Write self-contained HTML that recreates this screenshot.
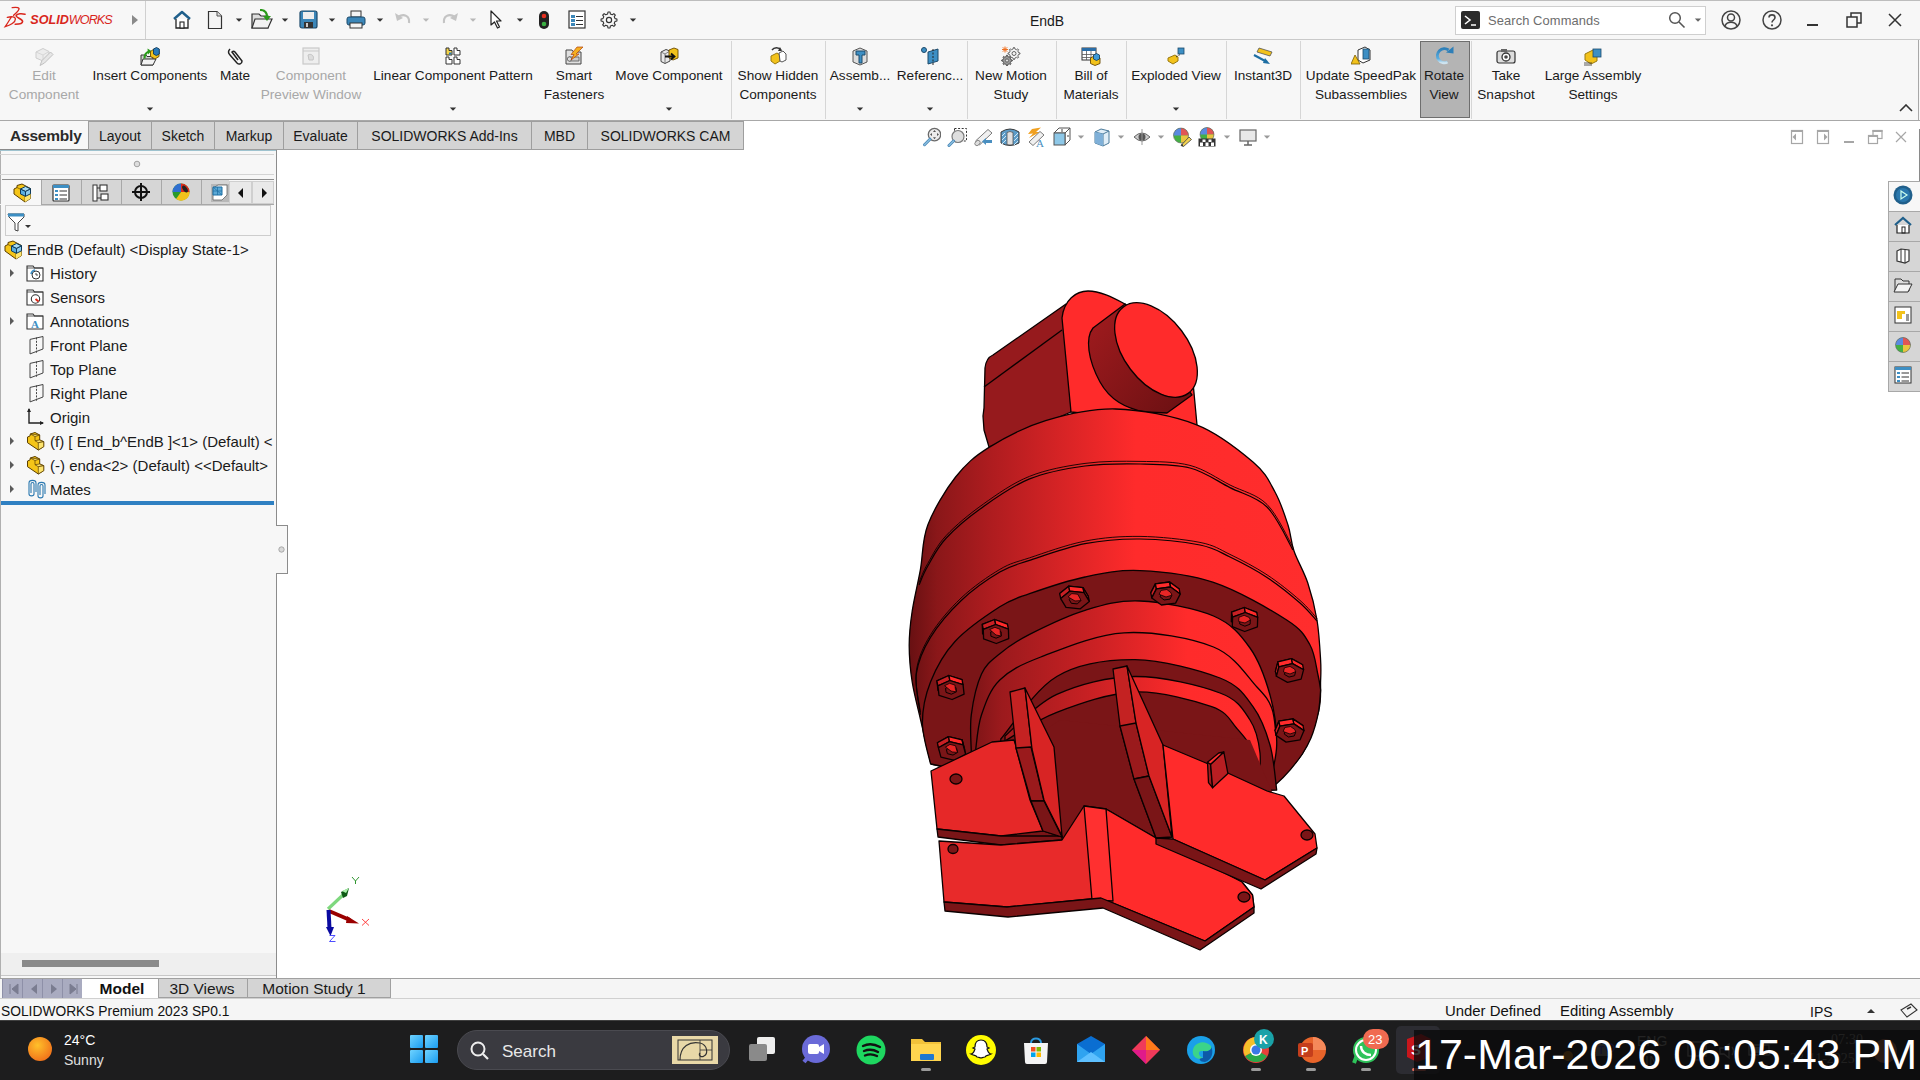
<!DOCTYPE html><html><head><meta charset="utf-8"><style>
html,body{margin:0;padding:0;width:1920px;height:1080px;overflow:hidden;background:#fff;font-family:"Liberation Sans",sans-serif;}
.t{position:absolute;white-space:nowrap;}
.r{position:absolute;}
</style></head><body>

<div class="r" style="left:0px;top:0px;width:1920px;height:40px;background:#f7f7f7;"></div>
<div class="r" style="left:0px;top:0px;width:1920px;height:1px;background:#bdbdbd;"></div>
<div class="r" style="left:0px;top:39px;width:1920px;height:1px;background:#c9c9c9;"></div>
<div class="r" style="left:145px;top:1px;width:1px;height:38px;background:#d0d0d0;"></div>
<svg class="r" style="left:0px;top:0px" width="30" height="30" viewBox="0 0 30 30"><g fill="none" stroke="#d9261c" stroke-linecap="round"><path d="M12.2 7.6 C15 7.3 18.3 7.2 19 8.3 C19.6 9.6 16.5 12.8 13.6 15.3" stroke-width="1.4"/><path d="M7.3 17.4 C11.5 16.3 15.3 16.5 15.4 19 C15.5 22.2 10.5 25.3 5.2 26.6 C7.5 23.5 9.5 20 11.2 17.2" stroke-width="1.3"/><path d="M25 14.2 C22 13.4 17.2 13.4 16.2 15.4 C15.2 17.6 22.6 18.8 22.6 21.6 C22.6 23.6 19.3 24.3 15.2 24.3" stroke-width="1.6"/></g></svg>
<div class="t" style="left:30.3px;top:14.13px;font-size:12.6px;line-height:12.6px;color:#d9261c;font-weight:normal;"><i><b>SOLID</b><span style="letter-spacing:-0.9px">WORKS</span></i></div>
<svg class="r" style="left:131px;top:14px" width="8" height="12" viewBox="0 0 8 12"><path d="M1 1 L7 6 L1 11Z" fill="#8a8a8a"/></svg>
<svg class="r" style="left:172px;top:10px" width="20" height="20" viewBox="0 0 20 20"><path d="M2 9 L10 2 L18 9" fill="none" stroke="#1f5f8b" stroke-width="2.4" stroke-linejoin="round"/><path d="M4 9 V18 H16 V9" fill="#fff" stroke="#222" stroke-width="1.3"/><rect x="8" y="12" width="4" height="6" fill="#fff" stroke="#222" stroke-width="1.1"/></svg>
<svg class="r" style="left:207px;top:10px" width="16" height="20" viewBox="0 0 16 20"><path d="M1.5 1.5 H10 L14.5 6 V18.5 H1.5Z" fill="#f4f4f4" stroke="#333" stroke-width="1.2"/><path d="M10 1.5 V6 H14.5" fill="#ddd" stroke="#555" stroke-width="1"/></svg>
<svg class="r" style="left:235px;top:18px" width="8" height="5" viewBox="0 0 8 5"><path d="M0.8 0.5 L7.2 0.5 L4 3.8Z" fill="#333"/></svg>
<svg class="r" style="left:251px;top:9px" width="22" height="21" viewBox="0 0 22 21"><path d="M1 5 H8 L10 7 H17 V19 H1Z" fill="#ddd" stroke="#333" stroke-width="1.2"/><path d="M4 10 H21 L17 19 H1Z" fill="#f2f2f2" stroke="#333" stroke-width="1.2"/><path d="M9 1 C14 1 16 4 16 8" fill="none" stroke="#2a9a1a" stroke-width="2.2"/><path d="M12 7 L16 12 L20 7Z" fill="#2a9a1a"/></svg>
<svg class="r" style="left:281px;top:18px" width="8" height="5" viewBox="0 0 8 5"><path d="M0.8 0.5 L7.2 0.5 L4 3.8Z" fill="#333"/></svg>
<svg class="r" style="left:299px;top:10px" width="19" height="19" viewBox="0 0 19 19"><rect x="1" y="1" width="17" height="17" rx="2" fill="#3b86b8" stroke="#1d4a6b" stroke-width="1.2"/><rect x="4" y="2" width="11" height="7" fill="#eee"/><rect x="5" y="12" width="9" height="6" fill="#333"/><rect x="7" y="13" width="2" height="4" fill="#ccc"/></svg>
<svg class="r" style="left:328px;top:18px" width="8" height="5" viewBox="0 0 8 5"><path d="M0.8 0.5 L7.2 0.5 L4 3.8Z" fill="#333"/></svg>
<svg class="r" style="left:346px;top:10px" width="20" height="19" viewBox="0 0 20 19"><rect x="5" y="1" width="10" height="6" fill="#f4f4f4" stroke="#333" stroke-width="1"/><rect x="1" y="7" width="18" height="8" rx="2" fill="#3b86b8" stroke="#1d4a6b" stroke-width="1"/><rect x="4" y="13" width="12" height="5" fill="#f4f4f4" stroke="#333" stroke-width="1"/></svg>
<svg class="r" style="left:376px;top:18px" width="8" height="5" viewBox="0 0 8 5"><path d="M0.8 0.5 L7.2 0.5 L4 3.8Z" fill="#333"/></svg>
<svg class="r" style="left:394px;top:11px" width="18" height="16" viewBox="0 0 18 16"><path d="M4 6 C10 2 16 5 15 12" fill="none" stroke="#c4c4c4" stroke-width="2.2"/><path d="M1 2 L3 10 L9 7Z" fill="#c4c4c4"/></svg>
<svg class="r" style="left:422px;top:18px" width="8" height="5" viewBox="0 0 8 5"><path d="M0.8 0.5 L7.2 0.5 L4 3.8Z" fill="#b8b8b8"/></svg>
<svg class="r" style="left:441px;top:11px" width="18" height="16" viewBox="0 0 18 16"><path d="M14 6 C8 2 2 5 3 12" fill="none" stroke="#c4c4c4" stroke-width="2.2"/><path d="M17 2 L15 10 L9 7Z" fill="#c4c4c4"/></svg>
<svg class="r" style="left:469px;top:18px" width="8" height="5" viewBox="0 0 8 5"><path d="M0.8 0.5 L7.2 0.5 L4 3.8Z" fill="#b8b8b8"/></svg>
<svg class="r" style="left:489px;top:10px" width="16" height="20" viewBox="0 0 16 20"><path d="M2 1 L2 15 L5.5 12 L8.5 18 L10.5 17 L7.5 11 L12 11Z" fill="#fff" stroke="#222" stroke-width="1.2" stroke-linejoin="round"/></svg>
<svg class="r" style="left:516px;top:18px" width="8" height="5" viewBox="0 0 8 5"><path d="M0.8 0.5 L7.2 0.5 L4 3.8Z" fill="#333"/></svg>
<svg class="r" style="left:538px;top:10px" width="12" height="20" viewBox="0 0 12 20"><rect x="1" y="1" width="10" height="18" rx="5" fill="#222"/><circle cx="6" cy="6" r="2.3" fill="#e53020"/><circle cx="6" cy="14" r="2.3" fill="#3cb043"/></svg>
<svg class="r" style="left:568px;top:10px" width="18" height="19" viewBox="0 0 18 19"><rect x="1" y="1" width="16" height="17" fill="#fff" stroke="#333" stroke-width="1.2"/><rect x="3" y="5" width="4" height="3" fill="#3b86b8"/><rect x="3" y="9" width="4" height="3" fill="#3b86b8"/><rect x="3" y="13" width="4" height="3" fill="#3b86b8"/><path d="M8 6.5H15M8 10.5H15M8 14.5H15" stroke="#333" stroke-width="1"/></svg>
<svg class="r" style="left:600px;top:11px" width="18" height="18" viewBox="0 0 18 18"><path d="M15.05 7.65 L16.93 7.96 L16.93 10.04 L15.05 10.35 L14.24 12.32 L15.34 13.88 L13.88 15.34 L12.32 14.24 L10.35 15.05 L10.04 16.93 L7.96 16.93 L7.65 15.05 L5.68 14.24 L4.12 15.34 L2.66 13.88 L3.76 12.32 L2.95 10.35 L1.07 10.04 L1.07 7.96 L2.95 7.65 L3.76 5.68 L2.66 4.12 L4.12 2.66 L5.68 3.76 L7.65 2.95 L7.96 1.07 L10.04 1.07 L10.35 2.95 L12.32 3.76 L13.88 2.66 L15.34 4.12 L14.24 5.68Z" fill="#f7f7f7" stroke="#333" stroke-width="1.1" stroke-linejoin="round"/><circle cx="9" cy="9" r="2.6" fill="none" stroke="#333" stroke-width="1.2"/></svg>
<svg class="r" style="left:629px;top:18px" width="8" height="5" viewBox="0 0 8 5"><path d="M0.8 0.5 L7.2 0.5 L4 3.8Z" fill="#333"/></svg>
<div class="t" style="left:1047px;top:14.15px;font-size:14px;line-height:14px;color:#1a1a1a;font-weight:normal;transform:translateX(-50%);">EndB</div>
<div class="r" style="left:1455px;top:6px;width:251px;height:29px;background:#ffffff;border:1px solid #cfcfcf;box-sizing:border-box;"></div>
<svg class="r" style="left:1461px;top:11px" width="19" height="18" viewBox="0 0 19 18"><rect x="0" y="0" width="19" height="18" rx="2" fill="#2b2b2b"/><path d="M4 5 L9 9 L4 13" fill="none" stroke="#fff" stroke-width="1.6"/><path d="M10 14 H15" stroke="#fff" stroke-width="1.5"/></svg>
<div class="t" style="left:1488px;top:14.88px;font-size:12.9px;line-height:12.9px;color:#6d6d6d;font-weight:normal;letter-spacing:0.1px;">Search Commands</div>
<svg class="r" style="left:1668px;top:11px" width="18" height="18" viewBox="0 0 18 18"><circle cx="7" cy="7" r="5.3" fill="none" stroke="#555" stroke-width="1.5"/><path d="M11 11 L16.5 16.5" stroke="#555" stroke-width="1.6"/></svg>
<svg class="r" style="left:1694px;top:18px" width="8" height="5" viewBox="0 0 8 5"><path d="M0.8 0.5 L7.2 0.5 L4 3.8Z" fill="#666"/></svg>
<svg class="r" style="left:1720px;top:9px" width="22" height="22" viewBox="0 0 22 22"><circle cx="11" cy="11" r="9" fill="none" stroke="#444" stroke-width="1.5"/><circle cx="11" cy="8.5" r="3.5" fill="none" stroke="#444" stroke-width="1.5"/><path d="M5 17 C7 12 15 12 17 17" fill="none" stroke="#444" stroke-width="1.5"/></svg>
<svg class="r" style="left:1761px;top:9px" width="22" height="22" viewBox="0 0 22 22"><circle cx="11" cy="11" r="9" fill="none" stroke="#444" stroke-width="1.5"/><path d="M8 8.5 C8 5 14 5 14 8.5 C14 11 11 11 11 13.5" fill="none" stroke="#444" stroke-width="1.6"/><circle cx="11" cy="16.3" r="1.1" fill="#444"/></svg>
<div class="r" style="left:1807px;top:24px;width:11px;height:2px;background:#333;"></div>
<svg class="r" style="left:1846px;top:12px" width="17" height="16" viewBox="0 0 17 16"><rect x="1" y="5" width="10" height="10" fill="none" stroke="#333" stroke-width="1.5"/><path d="M5 5 V1 H15 V11 H11" fill="none" stroke="#333" stroke-width="1.5"/></svg>
<svg class="r" style="left:1887px;top:12px" width="16" height="16" viewBox="0 0 16 16"><path d="M2 2 L14 14 M14 2 L2 14" stroke="#333" stroke-width="1.5"/></svg>
<div class="r" style="left:0px;top:40px;width:1920px;height:81px;background:#f7f7f7;"></div>
<div class="r" style="left:0px;top:120px;width:1920px;height:1px;background:#a8a8a8;"></div>
<div class="r" style="left:1918px;top:40px;width:1px;height:81px;background:#a8a8a8;"></div>
<div class="r" style="left:731px;top:41px;width:1px;height:78px;background:#d6d6d6;"></div>
<div class="r" style="left:825px;top:41px;width:1px;height:78px;background:#d6d6d6;"></div>
<div class="r" style="left:967px;top:41px;width:1px;height:78px;background:#d6d6d6;"></div>
<div class="r" style="left:1056px;top:41px;width:1px;height:78px;background:#d6d6d6;"></div>
<div class="r" style="left:1126px;top:41px;width:1px;height:78px;background:#d6d6d6;"></div>
<div class="r" style="left:1226px;top:41px;width:1px;height:78px;background:#d6d6d6;"></div>
<div class="r" style="left:1300px;top:41px;width:1px;height:78px;background:#d6d6d6;"></div>
<div class="r" style="left:1471px;top:41px;width:1px;height:78px;background:#d6d6d6;"></div>
<div class="r" style="left:1420px;top:41px;width:50px;height:77px;background:#b4b4b4;border:1px solid #6e6e6e;box-sizing:border-box;"></div>
<div class="t" style="left:44px;top:68.99px;font-size:13.6px;line-height:13.6px;color:#a8a8a8;font-weight:normal;transform:translateX(-50%);">Edit</div>
<div class="t" style="left:44px;top:87.99px;font-size:13.6px;line-height:13.6px;color:#a8a8a8;font-weight:normal;transform:translateX(-50%);">Component</div>
<div class="t" style="left:150px;top:68.99px;font-size:13.6px;line-height:13.6px;color:#1a1a1a;font-weight:normal;transform:translateX(-50%);">Insert Components</div>
<svg class="r" style="left:146px;top:106.5px" width="8" height="5" viewBox="0 0 8 5"><path d="M0.8 0.5 L7.2 0.5 L4 3.8Z" fill="#333"/></svg>
<div class="t" style="left:235px;top:68.99px;font-size:13.6px;line-height:13.6px;color:#1a1a1a;font-weight:normal;transform:translateX(-50%);">Mate</div>
<div class="t" style="left:311px;top:68.99px;font-size:13.6px;line-height:13.6px;color:#a8a8a8;font-weight:normal;transform:translateX(-50%);">Component</div>
<div class="t" style="left:311px;top:87.99px;font-size:13.6px;line-height:13.6px;color:#a8a8a8;font-weight:normal;transform:translateX(-50%);">Preview Window</div>
<div class="t" style="left:453px;top:68.99px;font-size:13.6px;line-height:13.6px;color:#1a1a1a;font-weight:normal;transform:translateX(-50%);">Linear Component Pattern</div>
<svg class="r" style="left:449px;top:106.5px" width="8" height="5" viewBox="0 0 8 5"><path d="M0.8 0.5 L7.2 0.5 L4 3.8Z" fill="#333"/></svg>
<div class="t" style="left:574px;top:68.99px;font-size:13.6px;line-height:13.6px;color:#1a1a1a;font-weight:normal;transform:translateX(-50%);">Smart</div>
<div class="t" style="left:574px;top:87.99px;font-size:13.6px;line-height:13.6px;color:#1a1a1a;font-weight:normal;transform:translateX(-50%);">Fasteners</div>
<div class="t" style="left:669px;top:68.99px;font-size:13.6px;line-height:13.6px;color:#1a1a1a;font-weight:normal;transform:translateX(-50%);">Move Component</div>
<svg class="r" style="left:665px;top:106.5px" width="8" height="5" viewBox="0 0 8 5"><path d="M0.8 0.5 L7.2 0.5 L4 3.8Z" fill="#333"/></svg>
<div class="t" style="left:778px;top:68.99px;font-size:13.6px;line-height:13.6px;color:#1a1a1a;font-weight:normal;transform:translateX(-50%);">Show Hidden</div>
<div class="t" style="left:778px;top:87.99px;font-size:13.6px;line-height:13.6px;color:#1a1a1a;font-weight:normal;transform:translateX(-50%);">Components</div>
<div class="t" style="left:860px;top:68.99px;font-size:13.6px;line-height:13.6px;color:#1a1a1a;font-weight:normal;transform:translateX(-50%);">Assemb...</div>
<svg class="r" style="left:856px;top:106.5px" width="8" height="5" viewBox="0 0 8 5"><path d="M0.8 0.5 L7.2 0.5 L4 3.8Z" fill="#333"/></svg>
<div class="t" style="left:930px;top:68.99px;font-size:13.6px;line-height:13.6px;color:#1a1a1a;font-weight:normal;transform:translateX(-50%);">Referenc...</div>
<svg class="r" style="left:926px;top:106.5px" width="8" height="5" viewBox="0 0 8 5"><path d="M0.8 0.5 L7.2 0.5 L4 3.8Z" fill="#333"/></svg>
<div class="t" style="left:1011px;top:68.99px;font-size:13.6px;line-height:13.6px;color:#1a1a1a;font-weight:normal;transform:translateX(-50%);">New Motion</div>
<div class="t" style="left:1011px;top:87.99px;font-size:13.6px;line-height:13.6px;color:#1a1a1a;font-weight:normal;transform:translateX(-50%);">Study</div>
<div class="t" style="left:1091px;top:68.99px;font-size:13.6px;line-height:13.6px;color:#1a1a1a;font-weight:normal;transform:translateX(-50%);">Bill of</div>
<div class="t" style="left:1091px;top:87.99px;font-size:13.6px;line-height:13.6px;color:#1a1a1a;font-weight:normal;transform:translateX(-50%);">Materials</div>
<div class="t" style="left:1176px;top:68.99px;font-size:13.6px;line-height:13.6px;color:#1a1a1a;font-weight:normal;transform:translateX(-50%);">Exploded View</div>
<svg class="r" style="left:1172px;top:106.5px" width="8" height="5" viewBox="0 0 8 5"><path d="M0.8 0.5 L7.2 0.5 L4 3.8Z" fill="#333"/></svg>
<div class="t" style="left:1263px;top:68.99px;font-size:13.6px;line-height:13.6px;color:#1a1a1a;font-weight:normal;transform:translateX(-50%);">Instant3D</div>
<div class="t" style="left:1361px;top:68.99px;font-size:13.6px;line-height:13.6px;color:#1a1a1a;font-weight:normal;transform:translateX(-50%);">Update SpeedPak</div>
<div class="t" style="left:1361px;top:87.99px;font-size:13.6px;line-height:13.6px;color:#1a1a1a;font-weight:normal;transform:translateX(-50%);">Subassemblies</div>
<div class="t" style="left:1444px;top:68.99px;font-size:13.6px;line-height:13.6px;color:#1a1a1a;font-weight:normal;transform:translateX(-50%);">Rotate</div>
<div class="t" style="left:1444px;top:87.99px;font-size:13.6px;line-height:13.6px;color:#1a1a1a;font-weight:normal;transform:translateX(-50%);">View</div>
<div class="t" style="left:1506px;top:68.99px;font-size:13.6px;line-height:13.6px;color:#1a1a1a;font-weight:normal;transform:translateX(-50%);">Take</div>
<div class="t" style="left:1506px;top:87.99px;font-size:13.6px;line-height:13.6px;color:#1a1a1a;font-weight:normal;transform:translateX(-50%);">Snapshot</div>
<div class="t" style="left:1593px;top:68.99px;font-size:13.6px;line-height:13.6px;color:#1a1a1a;font-weight:normal;transform:translateX(-50%);">Large Assembly</div>
<div class="t" style="left:1593px;top:87.99px;font-size:13.6px;line-height:13.6px;color:#1a1a1a;font-weight:normal;transform:translateX(-50%);">Settings</div>
<svg class="r" style="left:1899px;top:104px" width="14" height="8" viewBox="0 0 14 8"><path d="M1 7 L7 1 L13 7" fill="none" stroke="#333" stroke-width="1.6"/></svg>
<svg class="r" style="left:34px;top:46px" width="20" height="20" viewBox="0 0 20 20"><path d="M2 6 L9 2.5 L15 5.5 V12 L9 15 L2 12Z" fill="#ececec" stroke="#cdcdcd" stroke-width="1"/><path d="M2 6 L9 9 L15 5.5 M9 9 V15" fill="none" stroke="#d0d0d0" stroke-width="0.8"/><path d="M6 19.5 L8 14.5 L16.5 6 L19 8.5 L10.5 17Z" fill="#e6e6e6" stroke="#c0c0c0" stroke-width="1"/></svg>
<svg class="r" style="left:140px;top:46px" width="20" height="20" viewBox="0 0 20 20"><path d="M1 9 H6 L7 10.5 H13 V19 H1Z" fill="#cfcfcf" stroke="#333" stroke-width="1"/><path d="M3 13 H16 L13 19 H1Z" fill="#f2f2f2" stroke="#333" stroke-width="1"/><path d="M4.5 12.5 C4.5 8.5 6 6.5 9 5.5" fill="none" stroke="#2a9a1a" stroke-width="2"/><path d="M7.5 2.5 L11.5 5 L8 8.5Z" fill="#2a9a1a"/><path d="M10.5 5.5 L14 3 L19 4.5 V10.5 L15 13 L10.5 10.5Z" fill="#f2c21b" stroke="#6a4a00" stroke-width="0.9"/><path d="M13.5 3 L16.5 1.5 L19.3 3 V8 L16.3 9.5 L13.5 8Z" fill="#2a7ab8" stroke="#0d3a5c" stroke-width="0.9"/></svg>
<svg class="r" style="left:225px;top:46px" width="20" height="20" viewBox="0 0 20 20"><path d="M5 3 C3 5 3 7 5 9 L12 17 C14 19 17 18 17 15 L10 6 C9 5 8 5 7 6 L13 14" fill="none" stroke="#222" stroke-width="1.5"/></svg>
<svg class="r" style="left:301px;top:46px" width="20" height="20" viewBox="0 0 20 20"><rect x="2" y="2" width="16" height="16" fill="#eee" stroke="#c9c9c9" stroke-width="1.2"/><path d="M2 5 H18" stroke="#c9c9c9"/><path d="M7 9 C10 7 14 10 12 14 L8 14Z" fill="#ddd" stroke="#c4c4c4"/></svg>
<svg class="r" style="left:443px;top:46px" width="20" height="20" viewBox="0 0 20 20"><path d="M3 2 H6 V4.5 H9 V9 H3Z" fill="#f5d54a" stroke="#333" stroke-width="1"/><path d="M11 2 H14 V4.5 H17 V9 H11Z" fill="#fff" stroke="#333" stroke-width="1"/><path d="M3 11 H6 V13.5 H9 V18 H3Z" fill="#fff" stroke="#333" stroke-width="1"/><path d="M11 11 H14 V13.5 H17 V18 H11Z" fill="#fff" stroke="#333" stroke-width="1"/><rect x="6" y="6.5" width="2.5" height="2" fill="#2a7ab8"/></svg>
<svg class="r" style="left:564px;top:46px" width="20" height="20" viewBox="0 0 20 20"><path d="M2 4 H8 L9.5 6 H17 V18 H2Z" fill="#e0e0e0" stroke="#444" stroke-width="1"/><path d="M5 11 H15 V15 H5Z" fill="#ccc" stroke="#555" stroke-width="0.8"/><circle cx="5.5" cy="13" r="2.2" fill="#ddd" stroke="#555" stroke-width="0.8"/><path d="M13 1 L19 1 L12 8 H15 L7 14 L10 8.5 H7Z" fill="#f5b020" stroke="#b04010" stroke-width="0.7"/></svg>
<svg class="r" style="left:659px;top:46px" width="20" height="20" viewBox="0 0 20 20"><path d="M2 6 L7 3.5 L11 5 V15 L6 17.5 L2 15.5Z" fill="#e8e8e8" stroke="#444" stroke-width="1"/><path d="M2 6 L6 8 L11 5 M6 8 V17.5" fill="none" stroke="#666" stroke-width="0.8"/><path d="M10 4 L15 2 L19 3.5 V12 L14 14 L10 12Z" fill="#f2c21b" stroke="#6a4a00" stroke-width="0.9"/><path d="M6 10.5 H15 M12 7.5 L15.5 10.5 L12 13.5" fill="none" stroke="#111" stroke-width="1.8"/></svg>
<svg class="r" style="left:768px;top:46px" width="20" height="20" viewBox="0 0 20 20"><path d="M3 10 L9 7 L12 9 V15 L7 18 L3 15Z" fill="#f2c21b" stroke="#9a7a10"/><path d="M11 7 L15 5 L18 8 V14 L14 16 L12 15Z" fill="#fff" stroke="#555"/><path d="M4 4 C6 1 11 1 13 4" fill="none" stroke="#333" stroke-width="1.4"/><path d="M12 1 L14 5 L10 5Z" fill="#333"/></svg>
<svg class="r" style="left:850px;top:46px" width="20" height="20" viewBox="0 0 20 20"><path d="M3 5 L10 2 L17 5 V16 L10 19 L3 16Z" fill="#ddd" stroke="#555"/><path d="M6 5 H15 V9 H12 V17 H9 V9 H6Z" fill="#3d8fc4" stroke="#1d4a6b"/></svg>
<svg class="r" style="left:920px;top:46px" width="20" height="20" viewBox="0 0 20 20"><circle cx="4" cy="4" r="2.5" fill="#3d8fc4" stroke="#1d4a6b"/><path d="M8 6 L18 3 V15 L8 18Z" fill="#3d8fc4" stroke="#1d4a6b"/><path d="M13 3 V19" stroke="#222" stroke-dasharray="2 1.5"/></svg>
<svg class="r" style="left:1001px;top:46px" width="20" height="20" viewBox="0 0 20 20"><path d="M17.51 6.60 L18.97 6.94 L18.97 8.06 L17.51 8.40 L16.82 10.06 L17.62 11.32 L16.82 12.12 L15.56 11.32 L13.90 12.01 L13.56 13.47 L12.44 13.47 L12.10 12.01 L10.44 11.32 L9.18 12.12 L8.38 11.32 L9.18 10.06 L8.49 8.40 L7.03 8.06 L7.03 6.94 L8.49 6.60 L9.18 4.94 L8.38 3.68 L9.18 2.88 L10.44 3.68 L12.10 2.99 L12.44 1.53 L13.56 1.53 L13.90 2.99 L15.56 3.68 L16.82 2.88 L17.62 3.68 L16.82 4.94Z" fill="#f4f4f4" stroke="#555" stroke-width="0.9" stroke-linejoin="round"/><circle cx="13" cy="7.5" r="2" fill="none" stroke="#555" stroke-width="0.9"/><path d="M9.92 13.72 L11.28 14.00 L11.28 15.00 L9.92 15.28 L9.33 16.72 L10.08 17.88 L9.38 18.58 L8.22 17.83 L6.78 18.42 L6.50 19.78 L5.50 19.78 L5.22 18.42 L3.78 17.83 L2.62 18.58 L1.92 17.88 L2.67 16.72 L2.08 15.28 L0.72 15.00 L0.72 14.00 L2.08 13.72 L2.67 12.28 L1.92 11.12 L2.62 10.42 L3.78 11.17 L5.22 10.58 L5.50 9.22 L6.50 9.22 L6.78 10.58 L8.22 11.17 L9.38 10.42 L10.08 11.12 L9.33 12.28Z" fill="#9a9a9a" stroke="#444" stroke-width="0.9" stroke-linejoin="round"/><circle cx="6" cy="14.5" r="1.6" fill="#ddd" stroke="#444" stroke-width="0.7"/><path d="M4 0.5 V6.5 M1 3.5 H7 M1.8 1.3 L6.2 5.7 M6.2 1.3 L1.8 5.7" stroke="#f07020" stroke-width="1"/></svg>
<svg class="r" style="left:1081px;top:46px" width="20" height="20" viewBox="0 0 20 20"><rect x="1" y="2" width="14" height="12" fill="#fff" stroke="#333" stroke-width="1"/><rect x="1" y="2" width="14" height="3" fill="#2a6ea8"/><path d="M1 8.5 H15 M1 11.5 H15 M5.5 5 V14 M10 5 V14" stroke="#555" stroke-width="0.8"/><path d="M9.5 12 L14 9.5 L19 12 V17.5 L14 19.5 L9.5 17.5Z" fill="#f2c21b" stroke="#6a4a00" stroke-width="0.9"/><path d="M12.5 9 L15.5 7.5 L18.5 9 V13 L15.5 14.5 L12.5 13Z" fill="#3d9ad8" stroke="#0d3a5c" stroke-width="0.8"/></svg>
<svg class="r" style="left:1166px;top:46px" width="20" height="20" viewBox="0 0 20 20"><path d="M2 12 L9 9 L12 11 V15 L7 18 L2 15Z" fill="#f2c21b" stroke="#9a7a10"/><rect x="12" y="2" width="6" height="6" fill="#3d8fc4" stroke="#1d4a6b" stroke-width="0.8"/><path d="M10 11 L15 8" stroke="#333" stroke-dasharray="1.5 1.5"/></svg>
<svg class="r" style="left:1253px;top:46px" width="20" height="20" viewBox="0 0 20 20"><path d="M6 2 L19 6 L17 10 L4 6Z" fill="#f2c21b" stroke="#555" stroke-width="0.8"/><path d="M1 9 L14 16" stroke="#1d6ea3" stroke-width="2.2"/><path d="M12 12 L17 18 L10 17Z" fill="#1d6ea3"/></svg>
<svg class="r" style="left:1351px;top:46px" width="20" height="20" viewBox="0 0 20 20"><path d="M7 4 L14 1 L19 4 V14 L12 17 L7 14Z" fill="#fff" stroke="#333"/><rect x="12" y="3" width="6" height="10" fill="#3d8fc4" stroke="#1d4a6b" stroke-width="0.8"/><path d="M4 9 L9 18 H0Z" fill="#f2c21b" stroke="#7a5a00" stroke-width="0.8"/></svg>
<svg class="r" style="left:1434px;top:45px" width="20" height="20" viewBox="0 0 20 20"><defs><linearGradient id="rg" x1="0" y1="0" x2="0" y2="1"><stop offset="0" stop-color="#2e7fb8"/><stop offset="0.7" stop-color="#5aaee0"/><stop offset="1" stop-color="#cfe4f0"/></linearGradient></defs><path d="M14.5 5 A7 7 0 1 0 13.5 17" fill="none" stroke="url(#rg)" stroke-width="3"/><path d="M12 7.5 L19.5 1.5 L19.5 8.5Z" fill="#2e7fb8"/></svg>
<svg class="r" style="left:1496px;top:46px" width="20" height="20" viewBox="0 0 20 20"><rect x="1" y="5" width="18" height="12" rx="2" fill="#ddd" stroke="#333" stroke-width="1.2"/><rect x="5" y="3" width="6" height="3" fill="#666"/><circle cx="10" cy="11" r="4" fill="#fff" stroke="#333" stroke-width="1.3"/><circle cx="10" cy="11" r="1.8" fill="#444"/></svg>
<svg class="r" style="left:1583px;top:46px" width="20" height="20" viewBox="0 0 20 20"><path d="M2 8 L10 4 L14 7 V15 L8 18 L2 14Z" fill="#f2c21b" stroke="#9a7a10"/><rect x="10" y="3" width="8" height="8" fill="#3d8fc4" stroke="#1d4a6b" stroke-width="0.8"/><path d="M1 17 H9 M1 19 H9" stroke="#333" stroke-width="0.8"/></svg>
<div class="r" style="left:0px;top:121px;width:1920px;height:29px;background:#f7f7f7;"></div>
<div class="r" style="left:0px;top:149px;width:88px;height:1px;background:#8a8a8a;"></div>
<div class="t" style="left:10px;top:128.38px;font-size:15.5px;line-height:15.5px;color:#2a2a2a;font-weight:bold;letter-spacing:-0.2px;">Assembly</div>
<div class="r" style="left:88px;top:121px;width:656px;height:29px;background:#d4d4d4;border:1px solid #9e9e9e;box-sizing:border-box;"></div>
<div class="t" style="left:120.0px;top:129.15px;font-size:14px;line-height:14px;color:#1a1a1a;font-weight:normal;transform:translateX(-50%);">Layout</div>
<div class="r" style="left:151px;top:121px;width:1px;height:29px;background:#9e9e9e;"></div>
<div class="t" style="left:183.0px;top:129.15px;font-size:14px;line-height:14px;color:#1a1a1a;font-weight:normal;transform:translateX(-50%);">Sketch</div>
<div class="r" style="left:214px;top:121px;width:1px;height:29px;background:#9e9e9e;"></div>
<div class="t" style="left:249.0px;top:129.15px;font-size:14px;line-height:14px;color:#1a1a1a;font-weight:normal;transform:translateX(-50%);">Markup</div>
<div class="r" style="left:283px;top:121px;width:1px;height:29px;background:#9e9e9e;"></div>
<div class="t" style="left:320.5px;top:129.15px;font-size:14px;line-height:14px;color:#1a1a1a;font-weight:normal;transform:translateX(-50%);">Evaluate</div>
<div class="r" style="left:357px;top:121px;width:1px;height:29px;background:#9e9e9e;"></div>
<div class="t" style="left:444.5px;top:129.15px;font-size:14px;line-height:14px;color:#1a1a1a;font-weight:normal;transform:translateX(-50%);">SOLIDWORKS Add-Ins</div>
<div class="r" style="left:531px;top:121px;width:1px;height:29px;background:#9e9e9e;"></div>
<div class="t" style="left:559.5px;top:129.15px;font-size:14px;line-height:14px;color:#1a1a1a;font-weight:normal;transform:translateX(-50%);">MBD</div>
<div class="r" style="left:587px;top:121px;width:1px;height:29px;background:#9e9e9e;"></div>
<div class="t" style="left:665.5px;top:129.15px;font-size:14px;line-height:14px;color:#1a1a1a;font-weight:normal;transform:translateX(-50%);">SOLIDWORKS CAM</div>
<div class="r" style="left:0px;top:150px;width:277px;height:828px;background:#f7f7f7;"></div>
<div class="r" style="left:276px;top:150px;width:1px;height:828px;background:#8c8c8c;"></div>
<div class="r" style="left:0px;top:150px;width:1px;height:828px;background:#b0b0b0;"></div>
<div class="r" style="left:0px;top:150px;width:276px;height:1px;background:#9fc3cf;"></div>
<div class="r" style="left:0px;top:154px;width:274px;height:1px;background:#d4d4d4;"></div>
<svg class="r" style="left:133px;top:160px" width="8" height="8" viewBox="0 0 8 8"><circle cx="4" cy="4" r="2.8" fill="#ddd" stroke="#999" stroke-width="0.9"/></svg>
<div class="r" style="left:0px;top:174px;width:274px;height:1px;background:#d4d4d4;"></div>
<div class="r" style="left:2px;top:179px;width:272px;height:1px;background:#8e8e8e;"></div>
<div class="r" style="left:41px;top:180px;width:188px;height:25px;background:#d6d6d6;"></div>
<div class="r" style="left:41px;top:180px;width:1px;height:25px;background:#a8a8a8;"></div>
<div class="r" style="left:81px;top:180px;width:1px;height:25px;background:#a8a8a8;"></div>
<div class="r" style="left:121px;top:180px;width:1px;height:25px;background:#a8a8a8;"></div>
<div class="r" style="left:161px;top:180px;width:1px;height:25px;background:#a8a8a8;"></div>
<div class="r" style="left:201px;top:180px;width:1px;height:25px;background:#a8a8a8;"></div>
<div class="r" style="left:0px;top:204px;width:41px;height:1px;background:#f7f7f7;"></div>
<div class="r" style="left:41px;top:204px;width:233px;height:1px;background:#a8a8a8;"></div>
<div class="r" style="left:229px;top:181px;width:23px;height:23px;background:#e9e9e9;border:1px solid #cfcfcf;box-sizing:border-box;"></div>
<div class="r" style="left:252px;top:181px;width:22px;height:23px;background:#e9e9e9;border:1px solid #cfcfcf;box-sizing:border-box;"></div>
<svg class="r" style="left:237px;top:187px" width="7" height="12" viewBox="0 0 7 12"><path d="M6 1 L1 6 L6 11Z" fill="#111"/></svg>
<svg class="r" style="left:261px;top:187px" width="7" height="12" viewBox="0 0 7 12"><path d="M1 1 L6 6 L1 11Z" fill="#111"/></svg>
<svg class="r" style="left:13px;top:183px" width="20" height="20" viewBox="0 0 20 20"><path d="M1 6 L4 4.5 L4 2.5 L9 1 L17.5 5.5 V15.5 L12 19 L1 11Z" fill="#f5c518" stroke="#5a3e00" stroke-width="1"/><path d="M4 4.5 L8 6.5 M12 13 V19" fill="none" stroke="#7a5a00" stroke-width="0.8"/><path d="M12 13 L17.5 10 V15.5 L12 19Z" fill="#fde46e"/><path d="M7.5 6 L12.5 8.3 V13.3 L7.5 11Z" fill="#5aaee0" stroke="#0d3a5c" stroke-width="1"/><path d="M12.5 8.3 L17.5 5.8 V10.8 L12.5 13.3Z" fill="#8ccbee" stroke="#0d3a5c" stroke-width="1"/><path d="M7.5 6 L12.5 3.5 L17.5 5.8 L12.5 8.3Z" fill="#a8dcf5" stroke="#0d3a5c" stroke-width="1"/></svg>
<svg class="r" style="left:51px;top:183px" width="20" height="20" viewBox="0 0 20 20"><rect x="2" y="2" width="16" height="16" rx="1" fill="#fff" stroke="#333" stroke-width="1.2"/><rect x="2" y="2" width="16" height="3" fill="#3d8fc4"/><rect x="4" y="7" width="3" height="2" fill="#3d8fc4"/><rect x="4" y="11" width="3" height="2" fill="#3d8fc4"/><rect x="4" y="15" width="3" height="2" fill="#3d8fc4"/><path d="M8.5 8H16M8.5 12H16M8.5 16H16" stroke="#333" stroke-width="1"/></svg>
<svg class="r" style="left:91px;top:183px" width="20" height="20" viewBox="0 0 20 20"><path d="M4 2 V18 M4 5 H10 M4 15 H10" fill="none" stroke="#333" stroke-width="1.2"/><rect x="9" y="2" width="7" height="6" fill="#fff" stroke="#333" stroke-width="1.1"/><rect x="10" y="11" width="7" height="6" fill="#fff" stroke="#333" stroke-width="1.1"/><rect x="2" y="2" width="4" height="16" fill="#fff" stroke="#333" stroke-width="1"/></svg>
<svg class="r" style="left:131px;top:182px" width="20" height="20" viewBox="0 0 20 20"><circle cx="10" cy="10" r="6" fill="none" stroke="#111" stroke-width="2"/><path d="M10 1 V19 M1 10 H19" stroke="#111" stroke-width="2"/></svg>
<svg class="r" style="left:171px;top:182px" width="20" height="20" viewBox="0 0 20 20"><circle cx="10" cy="10" r="8.5" fill="#2a9a2a"/><path d="M10 10 L10 1.5 A8.5 8.5 0 0 1 18.5 10Z" fill="#e02a1a"/><path d="M10 10 L18.5 10 A8.5 8.5 0 0 1 5 17Z" fill="#f2c21b"/><path d="M10 10 L1.5 10 A8.5 8.5 0 0 1 10 1.5Z" fill="#2f6fd0"/><ellipse cx="14" cy="7" rx="2" ry="4" transform="rotate(-35 14 7)" fill="#222"/></svg>
<svg class="r" style="left:210px;top:183px" width="20" height="20" viewBox="0 0 20 20"><rect x="1" y="1" width="18" height="18" fill="#b8b8b8"/><path d="M3 5 L8 2 H17 V12 L12 17 H3Z" fill="#fff" stroke="#666" stroke-width="0.8"/><path d="M3 4 H12 V12 H3Z" fill="#5ca9d6" stroke="#1d6ea3" stroke-width="1"/><path d="M3 4 L12 12 M7.5 4 V12 M3 8 H12" stroke="#1d6ea3" stroke-width="0.7"/></svg>
<div class="r" style="left:5px;top:205px;width:266px;height:31px;background:#f7f7f7;border:1px solid #cdcdcd;box-sizing:border-box;"></div>
<svg class="r" style="left:7px;top:212px" width="24" height="20" viewBox="0 0 24 20"><path d="M1 2 H17 V5 L11 11 V19 L8 18 V11 L2 5Z" fill="#fff" stroke="#444" stroke-width="1"/><rect x="1" y="1.5" width="16" height="3" fill="#3d8fc4"/><path d="M18 13 H24 L21 16Z" fill="#333"/></svg>
<div class="t" style="left:27px;top:241.80px;font-size:15px;line-height:15px;color:#1a1a1a;font-weight:normal;">EndB (Default) &lt;Display State-1&gt;</div>
<svg class="r" style="left:4px;top:240px" width="20" height="20" viewBox="0 0 20 20"><path d="M1 6 L4 4.5 L4 2.5 L9 1 L17.5 5.5 V15.5 L12 19 L1 11Z" fill="#f5c518" stroke="#5a3e00" stroke-width="1"/><path d="M4 4.5 L8 6.5 M12 13 V19" fill="none" stroke="#7a5a00" stroke-width="0.8"/><path d="M12 13 L17.5 10 V15.5 L12 19Z" fill="#fde46e"/><path d="M7.5 6 L12.5 8.3 V13.3 L7.5 11Z" fill="#5aaee0" stroke="#0d3a5c" stroke-width="1"/><path d="M12.5 8.3 L17.5 5.8 V10.8 L12.5 13.3Z" fill="#8ccbee" stroke="#0d3a5c" stroke-width="1"/><path d="M7.5 6 L12.5 3.5 L17.5 5.8 L12.5 8.3Z" fill="#a8dcf5" stroke="#0d3a5c" stroke-width="1"/></svg>
<svg class="r" style="left:9px;top:268px" width="6" height="10" viewBox="0 0 6 10"><path d="M1 1 L5 5 L1 9Z" fill="#5a5a5a"/></svg>
<svg class="r" style="left:26px;top:263px" width="20" height="20" viewBox="0 0 20 20"><path d="M1 3 H7 L8.5 5 H17 V18 H1Z" fill="#fff" stroke="#333" stroke-width="1.1"/><path d="M1 5 H17" stroke="#333" stroke-width="0.8"/><circle cx="10" cy="12" r="4" fill="none" stroke="#333" stroke-width="1"/><path d="M5 11 A5 5 0 0 1 9 7" fill="none" stroke="#3d8fc4" stroke-width="1.6"/><path d="M10 10 V12 H12" stroke="#333" stroke-width="0.9" fill="none"/></svg>
<div class="t" style="left:50px;top:266.30px;font-size:15px;line-height:15px;color:#1a1a1a;font-weight:normal;">History</div>
<svg class="r" style="left:26px;top:287px" width="20" height="20" viewBox="0 0 20 20"><path d="M1 3 H7 L8.5 5 H17 V18 H1Z" fill="#fff" stroke="#333" stroke-width="1.1"/><path d="M1 5 H17" stroke="#333" stroke-width="0.8"/><circle cx="9.5" cy="12" r="4.2" fill="#fff" stroke="#333" stroke-width="1.1"/><path d="M9.5 12 L12.5 14.5" stroke="#e02a1a" stroke-width="2"/></svg>
<div class="t" style="left:50px;top:290.30px;font-size:15px;line-height:15px;color:#1a1a1a;font-weight:normal;">Sensors</div>
<svg class="r" style="left:9px;top:316px" width="6" height="10" viewBox="0 0 6 10"><path d="M1 1 L5 5 L1 9Z" fill="#5a5a5a"/></svg>
<svg class="r" style="left:26px;top:311px" width="20" height="20" viewBox="0 0 20 20"><path d="M1 3 H7 L8.5 5 H17 V18 H1Z" fill="#fff" stroke="#333" stroke-width="1.1"/><path d="M1 5 H17" stroke="#333" stroke-width="0.8"/><text x="5" y="17" font-family="Liberation Serif" font-weight="bold" font-size="11" fill="#3d8fc4">A</text></svg>
<div class="t" style="left:50px;top:314.30px;font-size:15px;line-height:15px;color:#1a1a1a;font-weight:normal;">Annotations</div>
<svg class="r" style="left:26px;top:335px" width="20" height="20" viewBox="0 0 20 20"><path d="M4 4.4 L17 1.5 V14 L4 18.9Z" fill="none" stroke="#444" stroke-width="1"/><path d="M10.5 2.5 V18" stroke="#444" stroke-width="1" stroke-dasharray="2 1.3"/></svg>
<div class="t" style="left:50px;top:338.30px;font-size:15px;line-height:15px;color:#1a1a1a;font-weight:normal;">Front Plane</div>
<svg class="r" style="left:26px;top:359px" width="20" height="20" viewBox="0 0 20 20"><path d="M4 4.4 L17 1.5 V14 L4 18.9Z" fill="none" stroke="#444" stroke-width="1"/><path d="M10.5 2.5 V18" stroke="#444" stroke-width="1" stroke-dasharray="2 1.3"/></svg>
<div class="t" style="left:50px;top:362.30px;font-size:15px;line-height:15px;color:#1a1a1a;font-weight:normal;">Top Plane</div>
<svg class="r" style="left:26px;top:383px" width="20" height="20" viewBox="0 0 20 20"><path d="M4 4.4 L17 1.5 V14 L4 18.9Z" fill="none" stroke="#444" stroke-width="1"/><path d="M10.5 2.5 V18" stroke="#444" stroke-width="1" stroke-dasharray="2 1.3"/></svg>
<div class="t" style="left:50px;top:386.30px;font-size:15px;line-height:15px;color:#1a1a1a;font-weight:normal;">Right Plane</div>
<svg class="r" style="left:26px;top:407px" width="20" height="20" viewBox="0 0 20 20"><path d="M3 2 V16 H17" fill="none" stroke="#222" stroke-width="1.4"/><path d="M1 5 L3 1 L5 5Z M14 14 L18 16 L14 18Z" fill="#222"/></svg>
<div class="t" style="left:50px;top:410.30px;font-size:15px;line-height:15px;color:#1a1a1a;font-weight:normal;">Origin</div>
<svg class="r" style="left:9px;top:436px" width="6" height="10" viewBox="0 0 6 10"><path d="M1 1 L5 5 L1 9Z" fill="#5a5a5a"/></svg>
<svg class="r" style="left:26px;top:431px" width="20" height="20" viewBox="0 0 20 20"><path d="M1.5 6 L4 5 L4.3 3 L9 1.5 L13.7 4 V9 L17.7 10.7 V15.7 L12.3 19 L1.5 11.7Z" fill="#f5c518" stroke="#5a3e00" stroke-width="1"/><path d="M4.3 3 L9 5.5 L13.7 4Z" fill="#fde46e" stroke="#5a3e00" stroke-width="0.7"/><path d="M9 9.7 L13.7 9 L17.7 10.7 L12.3 11.7Z" fill="#fde46e" stroke="#5a3e00" stroke-width="0.7"/><path d="M12.3 11.7 L17.7 10.7 V15.7 L12.3 19Z" fill="#fde46e" stroke="#5a3e00" stroke-width="0.7"/><path d="M9 5.5 V9.7" stroke="#5a3e00" stroke-width="0.7"/></svg>
<div class="t" style="left:50px;top:434.30px;font-size:15px;line-height:15px;color:#1a1a1a;font-weight:normal;">(f) [ End_b^EndB ]&lt;1&gt; (Default) &lt;</div>
<svg class="r" style="left:9px;top:460px" width="6" height="10" viewBox="0 0 6 10"><path d="M1 1 L5 5 L1 9Z" fill="#5a5a5a"/></svg>
<svg class="r" style="left:26px;top:455px" width="20" height="20" viewBox="0 0 20 20"><path d="M1.5 6 L4 5 L4.3 3 L9 1.5 L13.7 4 V9 L17.7 10.7 V15.7 L12.3 19 L1.5 11.7Z" fill="#f5c518" stroke="#5a3e00" stroke-width="1"/><path d="M4.3 3 L9 5.5 L13.7 4Z" fill="#fde46e" stroke="#5a3e00" stroke-width="0.7"/><path d="M9 9.7 L13.7 9 L17.7 10.7 L12.3 11.7Z" fill="#fde46e" stroke="#5a3e00" stroke-width="0.7"/><path d="M12.3 11.7 L17.7 10.7 V15.7 L12.3 19Z" fill="#fde46e" stroke="#5a3e00" stroke-width="0.7"/><path d="M9 5.5 V9.7" stroke="#5a3e00" stroke-width="0.7"/></svg>
<div class="t" style="left:50px;top:458.30px;font-size:15px;line-height:15px;color:#1a1a1a;font-weight:normal;">(-) enda&lt;2&gt; (Default) &lt;&lt;Default&gt;</div>
<svg class="r" style="left:9px;top:484px" width="6" height="10" viewBox="0 0 6 10"><path d="M1 1 L5 5 L1 9Z" fill="#5a5a5a"/></svg>
<svg class="r" style="left:26px;top:479px" width="20" height="20" viewBox="0 0 20 20"><path d="M5 14 V5 C5 3 8 3 8 5 V15 C8 17.5 3 17.5 3 15 V4 C3 0.5 10 0.5 10 4 V13" fill="none" stroke="#2a78b0" stroke-width="1.1"/><path d="M14 16 V7 C14 5 17 5 17 7 V17 C17 19.5 12 19.5 12 17 V6 C12 2.5 19 2.5 19 6 V15" fill="none" stroke="#2a78b0" stroke-width="1.1"/></svg>
<div class="t" style="left:50px;top:482.30px;font-size:15px;line-height:15px;color:#1a1a1a;font-weight:normal;">Mates</div>
<div class="r" style="left:1px;top:501px;width:273px;height:4px;background:#2f80c2;"></div>
<div class="r" style="left:276px;top:525px;width:12px;height:49px;background:#f7f7f7;border:1px solid #8c8c8c;border-left:none;box-sizing:border-box;"></div>
<svg class="r" style="left:278px;top:546px" width="7" height="7" viewBox="0 0 7 7"><circle cx="3.5" cy="3.5" r="2.7" fill="#d8d8d8" stroke="#9a9a9a" stroke-width="0.8"/></svg>
<div class="r" style="left:1px;top:953px;width:275px;height:23px;background:#efefef;"></div>
<div class="r" style="left:22px;top:960px;width:137px;height:7px;background:#8a8a8a;"></div>
<div class="r" style="left:1px;top:975px;width:275px;height:1px;background:#c8c8c8;"></div>
<div class="r" style="left:744px;top:121px;width:1176px;height:29px;background:#ffffff;"></div>
<div class="r" style="left:0px;top:120px;width:1920px;height:1px;background:#a8a8a8;"></div>
<svg class="r" style="left:921px;top:127px" width="20" height="20" viewBox="0 0 20 20"><circle cx="13.5" cy="7.6" r="6.2" fill="#ececec" stroke="#6a6a6a" stroke-width="1.3"/><path d="M13.5 3 L12 5 H15Z M13.5 12.2 L12 10.2 H15Z M9 7.6 L11 6.1 V9.1Z M18 7.6 L16 6.1 V9.1Z" fill="#555"/><path d="M9 12.2 L3.5 17.7" stroke="#4a88b8" stroke-width="3" stroke-linecap="round"/><path d="M9 12.2 L3.5 17.7" stroke="#8cc0e0" stroke-width="1.3" stroke-linecap="round"/></svg>
<svg class="r" style="left:947px;top:127px" width="20" height="20" viewBox="0 0 20 20"><rect x="7.5" y="1.5" width="12" height="12.5" fill="none" stroke="#333" stroke-width="1" stroke-dasharray="2 1.6"/><circle cx="11" cy="9.5" r="6" fill="#dedede" stroke="#7a7a7a" stroke-width="1.2"/><path d="M6.5 14 L2 18.5" stroke="#4a88b8" stroke-width="3" stroke-linecap="round"/><path d="M6.5 14 L2 18.5" stroke="#8cc0e0" stroke-width="1.3" stroke-linecap="round"/></svg>
<svg class="r" style="left:974px;top:127px" width="20" height="20" viewBox="0 0 20 20"><path d="M1.5 14 L14 2.5 L18 6 L5.5 18Z" fill="#f0f0f0" stroke="#7a7a7a" stroke-width="1"/><ellipse cx="3.5" cy="16" rx="2.2" ry="3" transform="rotate(45 3.5 16)" fill="#ddd" stroke="#777" stroke-width="0.8"/><path d="M8 14.5 L12 11 V13 H18 V16 H12 V18Z" fill="#4a8fc0"/></svg>
<svg class="r" style="left:1000px;top:127px" width="20" height="20" viewBox="0 0 20 20"><path d="M1 5 Q10 -1 19 5 V16 Q10 21 1 16Z" fill="#5b9cc8" stroke="#3a3a3a" stroke-width="1"/><path d="M7 5.5 Q10 3.5 13 5.5 V17.5 Q10 18.5 7 17.5Z" fill="#e0e0e0" stroke="#555" stroke-width="0.8"/><path d="M2 9 L5 6 M2 13 L6 9 M2 17 L6 13 M14 10 L18 6 M14 14 L18 10 M14 18 L18 14" stroke="#cfe6f5" stroke-width="1"/></svg>
<svg class="r" style="left:1026px;top:127px" width="20" height="20" viewBox="0 0 20 20"><path d="M6 2 L15 0.5 L10 5 H14 L3 11 L7 6.5 L2 7Z" fill="#f0a020"/><path d="M3 15 L14 4.5 L18 8 L7 18.5Z" fill="#f0f0f0" stroke="#7a7a7a" stroke-width="1"/><text x="10" y="20" font-size="11" font-family="Liberation Serif" fill="#4a8fc0">A</text></svg>
<svg class="r" style="left:1052px;top:127px" width="20" height="20" viewBox="0 0 20 20"><path d="M2 6 L7 1 H18 L13 6Z" fill="#fff" stroke="#555" stroke-width="1"/><path d="M13 6 L18 1 V13 L13 18Z" fill="#fff" stroke="#555" stroke-width="1"/><rect x="2" y="6" width="11" height="12" fill="#8ec8e8" stroke="#555" stroke-width="1"/><path d="M10 2 V5 M15 9 H17" stroke="#444" stroke-width="1"/></svg>
<svg class="r" style="left:1077px;top:135px" width="8" height="5" viewBox="0 0 8 5"><path d="M0.8 0.5 L7.2 0.5 L4 3.8Z" fill="#9a9a9a"/></svg>
<svg class="r" style="left:1092px;top:127px" width="20" height="20" viewBox="0 0 20 20"><path d="M3 5 L9 2 L17 4 V16 L11 19 L3 16Z" fill="#e0eef8" stroke="#4a7a9a"/><path d="M3 5 L11 7 L17 4 M11 7 V19" fill="none" stroke="#4a7a9a"/><path d="M3 5 L11 7 V19 L3 16Z" fill="#7fb0d8"/></svg>
<svg class="r" style="left:1117px;top:135px" width="8" height="5" viewBox="0 0 8 5"><path d="M0.8 0.5 L7.2 0.5 L4 3.8Z" fill="#9a9a9a"/></svg>
<svg class="r" style="left:1132px;top:127px" width="20" height="20" viewBox="0 0 20 20"><path d="M2 10 Q10 2 18 10 Q10 18 2 10Z" fill="#ccc" stroke="#666"/><circle cx="10" cy="10" r="3.5" fill="#555"/><path d="M10 2 V18" stroke="#999" stroke-width="1"/></svg>
<svg class="r" style="left:1157px;top:135px" width="8" height="5" viewBox="0 0 8 5"><path d="M0.8 0.5 L7.2 0.5 L4 3.8Z" fill="#9a9a9a"/></svg>
<svg class="r" style="left:1172px;top:127px" width="20" height="20" viewBox="0 0 20 20"><circle cx="9" cy="8.5" r="7.5" fill="#44b044"/><path d="M9 8.5 V1.0 A7.5 7.5 0 0 1 16.5 8.5Z" fill="#e05555"/><path d="M9 8.5 H16.5 A7.5 7.5 0 0 1 9 16.0Z" fill="#e8c440"/><path d="M9 8.5 H1.5 A7.5 7.5 0 0 1 9 1.0Z" fill="#5a8ae0"/><circle cx="9" cy="8.5" r="7.5" fill="none" stroke="#666" stroke-width="0.6"/><path d="M9 18.5 L17 10 L19.5 12.5 L11.5 19.5Z" fill="#f2d250" stroke="#444" stroke-width="0.8"/><path d="M9 18.5 L10 16 L11.5 19.5Z" fill="#333"/></svg>
<svg class="r" style="left:1197px;top:127px" width="20" height="20" viewBox="0 0 20 20"><circle cx="10" cy="7.5" r="7" fill="#44b044"/><path d="M10 7.5 V0.5 A7 7 0 0 1 17 7.5Z" fill="#e05555"/><path d="M10 7.5 H17 A7 7 0 0 1 10 14.5Z" fill="#e8c440"/><path d="M10 7.5 H3 A7 7 0 0 1 10 0.5Z" fill="#5a8ae0"/><circle cx="10" cy="7.5" r="7" fill="none" stroke="#666" stroke-width="0.6"/><rect x="1.5" y="11.5" width="17" height="8" fill="#333"/><path d="M3 15.5 H6 V19 H3Z M8.5 15.5 H11.5 V19 H8.5Z M14 15.5 H17 V19 H14Z M5.5 12.5 H8.5 V15 H5.5Z M11.5 12.5 H14.5 V15 H11.5Z" fill="#fff"/></svg>
<svg class="r" style="left:1223px;top:135px" width="8" height="5" viewBox="0 0 8 5"><path d="M0.8 0.5 L7.2 0.5 L4 3.8Z" fill="#9a9a9a"/></svg>
<svg class="r" style="left:1238px;top:127px" width="20" height="20" viewBox="0 0 20 20"><rect x="2" y="3" width="16" height="11" fill="#e8e8e8" stroke="#666" stroke-width="1.2"/><path d="M10 14 V18 M6 18 H14" stroke="#666" stroke-width="1.5"/></svg>
<svg class="r" style="left:1263px;top:135px" width="8" height="5" viewBox="0 0 8 5"><path d="M0.8 0.5 L7.2 0.5 L4 3.8Z" fill="#9a9a9a"/></svg>
<svg class="r" style="left:1790px;top:129px" width="16" height="16" viewBox="0 0 16 16"><rect x="1.5" y="1.5" width="11" height="13" fill="none" stroke="#a6a6a6" stroke-width="1.2"/><rect x="1" y="1" width="12" height="2" fill="#a6a6a6"/><path d="M2.5 8 L6 4.5 V11.5Z" fill="#a6a6a6"/></svg>
<svg class="r" style="left:1816px;top:129px" width="16" height="16" viewBox="0 0 16 16"><rect x="1.5" y="1.5" width="11" height="13" fill="none" stroke="#a6a6a6" stroke-width="1.2"/><rect x="1" y="1" width="12" height="2" fill="#a6a6a6"/><path d="M11.5 8 L8 4.5 V11.5Z" fill="#a6a6a6"/></svg>
<div class="r" style="left:1844px;top:141px;width:10px;height:2px;background:#a6a6a6;"></div>
<svg class="r" style="left:1867px;top:129px" width="18" height="16" viewBox="0 0 18 16"><rect x="6" y="1.5" width="9" height="8" fill="none" stroke="#a6a6a6" stroke-width="1.2"/><rect x="5.5" y="1" width="10" height="2" fill="#a6a6a6"/><rect x="1.5" y="6.5" width="9" height="8" fill="#fff" stroke="#a6a6a6" stroke-width="1.2"/><rect x="1" y="6" width="10" height="2" fill="#a6a6a6"/></svg>
<svg class="r" style="left:1894px;top:130px" width="14" height="14" viewBox="0 0 14 14"><path d="M2 2 L12 12 M12 2 L2 12" stroke="#a6a6a6" stroke-width="1.2"/></svg>
<div class="r" style="left:1919px;top:129px;width:1px;height:52px;background:#8a8a8a;"></div>
<div class="r" style="left:1888px;top:181px;width:32px;height:211px;background:#d6d6d6;border:1px solid #a8a8a8;border-right:none;box-sizing:border-box;"></div>
<div class="r" style="left:1889px;top:182px;width:31px;height:29px;background:#f7f7f7;"></div>
<div class="r" style="left:1888px;top:211px;width:32px;height:1px;background:#a8a8a8;"></div>
<div class="r" style="left:1888px;top:241px;width:32px;height:1px;background:#a8a8a8;"></div>
<div class="r" style="left:1888px;top:271px;width:32px;height:1px;background:#a8a8a8;"></div>
<div class="r" style="left:1888px;top:301px;width:32px;height:1px;background:#a8a8a8;"></div>
<div class="r" style="left:1888px;top:331px;width:32px;height:1px;background:#a8a8a8;"></div>
<div class="r" style="left:1888px;top:361px;width:32px;height:1px;background:#a8a8a8;"></div>
<svg class="r" style="left:1893px;top:185px" width="20" height="20" viewBox="0 0 20 20"><circle cx="10" cy="10" r="9.5" fill="#1f5f8b"/><circle cx="10" cy="10" r="7" fill="#2a78ad"/><path d="M8 6 L14 10 L8 14Z" fill="none" stroke="#cfe" stroke-width="1.2"/></svg>
<svg class="r" style="left:1893px;top:215px" width="20" height="20" viewBox="0 0 20 20"><path d="M2 10 L10 3 L18 10" fill="none" stroke="#1f5f8b" stroke-width="2.2"/><path d="M4 10 V18 H16 V10" fill="#fff" stroke="#222" stroke-width="1.2"/><rect x="9" y="12" width="3" height="6" fill="none" stroke="#222"/></svg>
<svg class="r" style="left:1893px;top:245px" width="20" height="20" viewBox="0 0 20 20"><path d="M4 6 L8 4 L16 5 V16 L12 18 L4 16Z" fill="#fff" stroke="#333" stroke-width="1.2"/><path d="M8 4 V17 M12 5 V18" stroke="#333"/></svg>
<svg class="r" style="left:1893px;top:275px" width="20" height="20" viewBox="0 0 20 20"><path d="M2 4 H8 L10 6 H16 V16 H2Z" fill="#ddd" stroke="#333"/><path d="M5 9 H19 L15 17 H1Z" fill="#f4f4f4" stroke="#333"/></svg>
<svg class="r" style="left:1893px;top:305px" width="20" height="20" viewBox="0 0 20 20"><rect x="2" y="2" width="16" height="16" fill="#fff" stroke="#333"/><path d="M4 6 H12 V9 H9 V14 H4Z" fill="#f2c21b"/><rect x="13" y="9" width="3" height="7" fill="#999"/></svg>
<svg class="r" style="left:1893px;top:335px" width="20" height="20" viewBox="0 0 20 20"><circle cx="10" cy="10" r="7.5" fill="#44b044"/><path d="M10 10 V2.5 A7.5 7.5 0 0 1 17.5 10Z" fill="#e05555"/><path d="M10 10 H17.5 A7.5 7.5 0 0 1 10 17.5Z" fill="#e8c440"/><path d="M10 10 H2.5 A7.5 7.5 0 0 1 10 2.5Z" fill="#5a8ae0"/><circle cx="10" cy="10" r="7.5" fill="none" stroke="#666" stroke-width="0.6"/></svg>
<svg class="r" style="left:1893px;top:365px" width="20" height="20" viewBox="0 0 20 20"><rect x="2" y="2" width="16" height="16" fill="#fff" stroke="#333"/><rect x="2" y="2" width="16" height="3" fill="#3d8fc4"/><rect x="4" y="7" width="3" height="2" fill="#3d8fc4"/><rect x="4" y="11" width="3" height="2" fill="#3d8fc4"/><rect x="4" y="15" width="3" height="2" fill="#3d8fc4"/><path d="M8.5 8H16M8.5 12H16M8.5 16H16" stroke="#333"/></svg>
<svg class="r" style="left:300px;top:860px" width="100" height="100" viewBox="0 0 100 100"><path d="M28 49 L44 34" stroke="#7ed87e" stroke-width="3.2"/><path d="M41 32 L49 28 L47 36 L43 38Z" fill="#0d5a14"/><path d="M42 31 L49 28 L46 33Z" fill="#a8f0a8"/>
<path d="M29 51 L50 60" stroke="#9a0000" stroke-width="3.6"/><path d="M47 56 L59 63.5 L46 63Z" fill="#9a0000"/>
<path d="M28.5 50 L29.5 68" stroke="#0a0aa0" stroke-width="4"/><path d="M26 67 L34 67 L30.5 76Z" fill="#0a0aa0"/>
<path d="M52 17 L55.5 21 L59 17 M55.5 21 V24" fill="none" stroke="#1a8a1a" stroke-width="0.9"/>
<path d="M62 59 L69 65.5 M69 59 L62 65.5" stroke="#ff3030" stroke-width="0.9"/>
<path d="M29.5 75.5 H35 L29.5 81.5 H35.5" fill="none" stroke="#3a3aff" stroke-width="0.9"/></svg>
<svg class="r" style="left:0;top:0" width="1920" height="1080" viewBox="0 0 1920 1080"><defs><linearGradient id="bg" x1="908" y1="0" x2="1322" y2="0" gradientUnits="userSpaceOnUse"><stop offset="0" stop-color="#661012"/><stop offset="0.07" stop-color="#8a1719"/><stop offset="0.2" stop-color="#ae1c1f"/><stop offset="0.36" stop-color="#d42325"/><stop offset="0.55" stop-color="#ff2b2b"/><stop offset="1" stop-color="#ff2d2d"/></linearGradient><linearGradient id="bg2" x1="970" y1="0" x2="1290" y2="0" gradientUnits="userSpaceOnUse"><stop offset="0" stop-color="#7a1416"/><stop offset="0.1" stop-color="#9c1a1d"/><stop offset="0.4" stop-color="#cc2124"/><stop offset="0.68" stop-color="#ff2b2b"/><stop offset="1" stop-color="#ff2d2d"/></linearGradient><linearGradient id="cyl" x1="1090" y1="330" x2="1190" y2="410" gradientUnits="userSpaceOnUse"><stop offset="0" stop-color="#9c1a1d"/><stop offset="1" stop-color="#6a1012"/></linearGradient></defs><path d="M985 368 Q986 358 993 355 L1066 304 L1071 412 L989 447 L984 430 L983 416 L984 408Z" fill="#961a1d" stroke="#0a0000" stroke-width="1.3" stroke-linejoin="round"/><path d="M984 387 L1062 330" fill="none" stroke="#0a0000" stroke-width="1.3" stroke-linejoin="round"/><path d="M1062 318 C1064 300 1076 291 1088 291 C1100 291 1112 297 1125 304 L1190 350 L1197 425 L1071 412Z" fill="#ff2b2b" stroke="#0a0000" stroke-width="1.3" stroke-linejoin="round"/><path d="M1093 328 C1085 338 1088 360 1100 382 C1110 400 1125 408 1145 412 L1167 413 L1192 395 L1125 304Z" fill="url(#cyl)" stroke="#0a0000" stroke-width="1.3" stroke-linejoin="round"/><ellipse cx="1156" cy="350" rx="54" ry="32" transform="rotate(53 1156 350)" fill="#ff2b2b" stroke="#0a0000" stroke-width="1.3" stroke-linejoin="round"/><path d="M931.0 764.0 C929.2 756.5 923.5 732.7 920.4 719.0 C917.3 705.3 914.1 694.2 912.2 682.0 C910.3 669.8 909.2 657.3 909.2 645.5 C909.2 633.7 910.3 623.6 912.2 611.0 C914.1 598.4 917.8 583.9 920.4 569.6 C923.0 555.3 921.9 540.4 927.8 525.0 C933.7 509.6 945.4 489.9 955.6 477.0 C965.8 464.1 974.0 456.8 989.0 447.4 C1004.0 438.0 1024.5 427.1 1045.6 420.7 C1066.7 414.3 1090.5 408.4 1115.6 409.0 C1140.7 409.6 1173.1 415.8 1196.0 424.6 C1218.9 433.4 1239.8 450.8 1253.0 462.0 C1266.2 473.2 1269.2 481.5 1275.0 492.0 C1280.8 502.5 1284.8 515.2 1288.0 525.0 C1291.2 534.8 1290.7 541.3 1294.0 551.0 C1297.3 560.7 1304.0 571.5 1307.8 583.0 C1311.6 594.5 1314.9 607.2 1317.0 620.0 C1319.1 632.8 1320.0 649.8 1320.6 660.0 C1321.2 670.2 1320.9 672.5 1320.6 681.0 C1320.3 689.5 1321.6 699.1 1318.6 711.3 C1315.5 723.5 1310.8 740.8 1302.3 754.0 C1293.8 767.2 1273.4 784.7 1267.6 790.8 L1100 800Z" fill="url(#bg)" stroke="#0a0000" stroke-width="1.3" stroke-linejoin="round"/><path d="M919.0 585.0 C920.5 581.8 923.2 573.8 927.8 566.0 C932.3 558.2 937.0 547.9 946.3 538.0 C955.5 528.1 969.4 516.5 983.3 506.7 C997.2 496.8 1012.6 485.7 1029.6 478.9 C1046.5 472.1 1066.6 468.5 1085.0 466.0 C1103.4 463.5 1122.5 463.7 1140.0 464.0 C1157.5 464.3 1175.0 464.1 1190.0 468.0 C1205.0 471.9 1217.2 481.1 1230.0 487.6 C1242.8 494.1 1256.5 496.6 1267.0 507.0 C1277.5 517.4 1288.7 542.8 1293.0 550.0" fill="none" stroke="#0a0000" stroke-width="1.2"/><path d="M919.0 582.4 C920.5 579.2 923.2 571.2 927.8 563.4 C932.3 555.6 937.0 545.3 946.3 535.4 C955.5 525.5 969.4 513.9 983.3 504.1 C997.2 494.2 1012.6 483.1 1029.6 476.3 C1046.5 469.5 1066.6 465.9 1085.0 463.4 C1103.4 460.9 1122.5 461.1 1140.0 461.4 C1157.5 461.7 1175.0 461.5 1190.0 465.4 C1205.0 469.3 1217.2 478.5 1230.0 485.0 C1242.8 491.5 1256.5 494.0 1267.0 504.4 C1277.5 514.8 1288.7 540.2 1293.0 547.4" fill="none" stroke="#0a0000" stroke-width="0.9"/><path d="M920.4 714.8 C919.7 708.0 914.6 686.9 916.3 674.0 C918.0 661.1 923.0 649.6 930.5 637.4 C938.0 625.2 949.5 611.6 961.0 600.7 C972.5 589.8 988.4 578.7 999.8 572.0 C1011.2 565.3 1015.4 565.1 1029.6 560.4 C1043.8 555.7 1066.6 547.3 1085.0 543.7 C1103.4 540.1 1120.8 538.8 1140.0 539.0 C1159.2 539.2 1185.0 542.0 1200.0 545.0 C1215.0 548.0 1218.8 551.6 1230.0 557.0 C1241.2 562.4 1255.3 569.7 1267.0 577.4 C1278.7 585.1 1291.7 595.7 1300.0 603.0 C1308.3 610.3 1314.2 618.0 1317.0 621.0" fill="none" stroke="#0a0000" stroke-width="1.2"/><path d="M920.4 712.2 C919.7 705.4 914.6 684.3 916.3 671.4 C918.0 658.5 923.0 647.0 930.5 634.8 C938.0 622.6 949.5 609.0 961.0 598.1 C972.5 587.2 988.4 576.1 999.8 569.4 C1011.2 562.7 1015.4 562.5 1029.6 557.8 C1043.8 553.1 1066.6 544.7 1085.0 541.1 C1103.4 537.5 1120.8 536.2 1140.0 536.4 C1159.2 536.6 1185.0 539.4 1200.0 542.4 C1215.0 545.4 1218.8 549.0 1230.0 554.4 C1241.2 559.8 1255.3 567.1 1267.0 574.8 C1278.7 582.5 1291.7 593.1 1300.0 600.4 C1308.3 607.7 1314.2 615.4 1317.0 618.4" fill="none" stroke="#0a0000" stroke-width="0.9"/><path d="M930.5 763.7 C929.1 756.9 922.4 736.6 922.4 723.0 C922.4 709.4 925.1 695.6 930.5 682.0 C935.9 668.4 943.5 654.0 955.0 641.5 C966.5 629.0 987.4 614.8 999.8 606.8 C1012.2 598.8 1015.4 598.7 1029.6 593.7 C1043.8 588.7 1066.6 580.9 1085.0 577.0 C1103.4 573.1 1118.6 569.7 1140.0 570.6 C1161.4 571.5 1189.0 574.2 1213.5 582.4 C1238.0 590.6 1270.6 609.6 1286.7 620.0 C1302.8 630.4 1304.8 635.8 1310.0 645.0 C1315.2 654.2 1316.2 667.5 1318.0 675.0 C1319.8 682.5 1320.2 687.5 1320.6 690.0 C1320 700 1319.5 705 1318.6 711.3 C1314 735 1308 745 1302.3 754 C1290 772 1280 782 1267.6 790.8 L1100 800 L931 764Z" fill="#7a1517" stroke="#0a0000" stroke-width="1.3" stroke-linejoin="round"/><path d="M971.3 752.0 C971.3 745.8 969.6 727.8 971.3 714.8 C973.0 701.8 976.8 684.2 981.5 674.0 C986.2 663.8 991.8 660.3 999.8 653.7 C1007.8 647.1 1015.4 641.6 1029.6 634.4 C1043.8 627.2 1066.6 616.0 1085.0 610.4 C1103.4 604.8 1118.6 600.1 1140.0 601.0 C1161.4 601.9 1195.2 608.2 1213.5 616.0 C1231.8 623.8 1240.6 634.8 1250.0 648.0 C1259.4 661.2 1265.5 678.8 1270.0 695.0 C1274.5 711.2 1277.0 729.2 1276.7 745.0 C1276.4 760.8 1269.5 782.5 1268.0 790.0 L1100 800 L974 790Z" fill="url(#bg2)" stroke="#0a0000" stroke-width="1.3" stroke-linejoin="round"/><path d="M975.4 752.0 C976.4 745.8 977.4 726.8 981.5 714.8 C985.6 702.8 989.9 689.6 999.8 680.0 C1009.7 670.4 1020.1 664.9 1040.8 657.0 C1061.5 649.1 1095.2 634.5 1124.0 632.8 C1152.8 631.1 1191.4 638.0 1213.5 647.0 C1235.6 656.0 1247.0 676.5 1256.7 686.7 C1266.4 696.9 1268.5 700.0 1271.7 708.0 C1274.9 716.0 1275.3 730.5 1276.0 735.0" fill="none" stroke="#0a0000" stroke-width="1.3" stroke-linejoin="round"/><path d="M1000.8 739.0 C1010.1 728.6 1034.4 689.7 1056.8 676.5 C1079.2 663.3 1107.8 659.5 1135.0 659.7 C1162.2 660.0 1200.3 670.2 1220.0 678.0 C1239.7 685.8 1244.7 695.5 1253.0 706.7 C1261.3 717.9 1266.0 731.1 1270.0 745.0 C1274.0 758.9 1275.6 782.5 1276.7 790.0 L1000 800Z" fill="#7a1517" stroke="#0a0000" stroke-width="1.3" stroke-linejoin="round"/><path d="M1005.0 736.0 C1013.6 729.1 1035.1 704.3 1056.8 694.4 C1078.5 684.5 1107.8 676.7 1135.0 676.5 C1162.2 676.3 1200.8 685.8 1220.0 693.0 C1239.2 700.2 1243.3 710.0 1250.0 720.0 C1256.7 730.0 1258.7 741.3 1260.0 753.0 C1261.3 764.7 1258.3 783.8 1258.0 790.0 L1005 800Z" fill="url(#bg2)" stroke="#0a0000" stroke-width="1.3" stroke-linejoin="round"/><path d="M1005.0 741.0 C1013.6 736.2 1035.1 720.5 1056.8 712.3 C1078.5 704.1 1109.2 692.9 1135.0 692.0 C1160.8 691.1 1194.8 700.7 1211.7 706.7 C1228.7 712.8 1229.8 720.6 1236.7 728.3 C1243.6 736.0 1249.7 742.7 1253.0 753.0 C1256.3 763.3 1256.1 783.8 1256.7 790.0 L1005 800Z" fill="#7a1517" stroke="#0a0000" stroke-width="1.3" stroke-linejoin="round"/><polygon points="1007.7,633.6 995.3,638.5 982.6,633.9 982.3,624.4 994.7,619.5 1007.4,624.1" fill="#7a1517" stroke="#0a0000" stroke-width="1.3" stroke-linejoin="round"/><polygon points="982.3,624.4 994.7,619.5 995.7,624.5 983.3,629.4" fill="#c82024" stroke="#0a0000" stroke-width="1.3" stroke-linejoin="round"/><polygon points="994.7,619.5 1007.4,624.1 1008.4,629.1 995.7,624.5" fill="#ff2b2b" stroke="#0a0000" stroke-width="1.3" stroke-linejoin="round"/><polygon points="1008.7,638.6 996.3,643.5 983.6,638.9 983.3,629.4 995.7,624.5 1008.4,629.1" fill="#7a1517" stroke="#0a0000" stroke-width="1.3" stroke-linejoin="round"/><polygon points="1001.3,636.0 996.1,638.2 990.9,636.2 990.7,632.0 995.9,629.8 1001.1,631.8" fill="#7a1517" stroke="#0a0000" stroke-width="1"/><polygon points="989.7,629.5 994.9,627.3 1000.1,629.3 1000.3,633.5 1001.3,636.0 996.0,635.0" fill="#e82626" stroke="#0a0000" stroke-width="0.8"/><polygon points="1088.3,596.4 1079.3,603.8 1065.0,602.4 1059.7,593.6 1068.7,586.2 1083.0,587.6" fill="#7a1517" stroke="#0a0000" stroke-width="1.3" stroke-linejoin="round"/><polygon points="1059.7,593.6 1068.7,586.2 1069.7,591.2 1060.7,598.6" fill="#c82024" stroke="#0a0000" stroke-width="1.3" stroke-linejoin="round"/><polygon points="1068.7,586.2 1083.0,587.6 1084.0,592.6 1069.7,591.2" fill="#ff2b2b" stroke="#0a0000" stroke-width="1.3" stroke-linejoin="round"/><polygon points="1083.0,587.6 1088.3,596.4 1089.3,601.4 1084.0,592.6" fill="#ff2b2b" stroke="#0a0000" stroke-width="1.3" stroke-linejoin="round"/><polygon points="1089.3,601.4 1080.3,608.8 1066.0,607.4 1060.7,598.6 1069.7,591.2 1084.0,592.6" fill="#7a1517" stroke="#0a0000" stroke-width="1.3" stroke-linejoin="round"/><polygon points="1080.9,600.6 1077.2,603.9 1071.3,603.3 1069.1,599.4 1072.8,596.1 1078.7,596.7" fill="#7a1517" stroke="#0a0000" stroke-width="1"/><polygon points="1068.1,596.9 1071.8,593.6 1077.7,594.2 1079.9,598.1 1080.9,600.6 1075.0,601.0" fill="#e82626" stroke="#0a0000" stroke-width="0.8"/><polygon points="1179.2,589.1 1174.6,598.1 1160.4,600.0 1150.8,592.9 1155.4,583.9 1169.6,582.0" fill="#7a1517" stroke="#0a0000" stroke-width="1.3" stroke-linejoin="round"/><polygon points="1150.8,592.9 1155.4,583.9 1156.4,588.9 1151.8,597.9" fill="#c82024" stroke="#0a0000" stroke-width="1.3" stroke-linejoin="round"/><polygon points="1155.4,583.9 1169.6,582.0 1170.6,587.0 1156.4,588.9" fill="#ff2b2b" stroke="#0a0000" stroke-width="1.3" stroke-linejoin="round"/><polygon points="1169.6,582.0 1179.2,589.1 1180.2,594.1 1170.6,587.0" fill="#ff2b2b" stroke="#0a0000" stroke-width="1.3" stroke-linejoin="round"/><polygon points="1180.2,594.1 1175.6,603.1 1161.4,605.0 1151.8,597.9 1156.4,588.9 1170.6,587.0" fill="#7a1517" stroke="#0a0000" stroke-width="1.3" stroke-linejoin="round"/><polygon points="1171.9,595.2 1170.0,599.1 1164.1,600.0 1160.1,596.8 1162.0,592.9 1167.9,592.0" fill="#7a1517" stroke="#0a0000" stroke-width="1"/><polygon points="1159.1,594.3 1161.0,590.4 1166.9,589.5 1170.9,592.7 1171.9,595.2 1166.0,597.0" fill="#e82626" stroke="#0a0000" stroke-width="0.8"/><polygon points="1256.7,612.4 1256.4,621.9 1243.7,626.5 1231.3,621.6 1231.6,612.1 1244.3,607.5" fill="#7a1517" stroke="#0a0000" stroke-width="1.3" stroke-linejoin="round"/><polygon points="1231.6,612.1 1244.3,607.5 1245.3,612.5 1232.6,617.1" fill="#c82024" stroke="#0a0000" stroke-width="1.3" stroke-linejoin="round"/><polygon points="1244.3,607.5 1256.7,612.4 1257.7,617.4 1245.3,612.5" fill="#ff2b2b" stroke="#0a0000" stroke-width="1.3" stroke-linejoin="round"/><polygon points="1257.7,617.4 1257.4,626.9 1244.7,631.5 1232.3,626.6 1232.6,617.1 1245.3,612.5" fill="#7a1517" stroke="#0a0000" stroke-width="1.3" stroke-linejoin="round"/><polygon points="1250.3,620.0 1250.1,624.2 1244.9,626.2 1239.7,624.0 1239.9,619.8 1245.1,617.8" fill="#7a1517" stroke="#0a0000" stroke-width="1"/><polygon points="1238.7,621.5 1238.9,617.3 1244.1,615.3 1249.3,617.5 1250.3,620.0 1245.0,623.0" fill="#e82626" stroke="#0a0000" stroke-width="0.8"/><polygon points="1302.6,664.7 1300.1,674.1 1286.5,677.4 1275.4,671.3 1277.9,661.9 1291.5,658.6" fill="#7a1517" stroke="#0a0000" stroke-width="1.3" stroke-linejoin="round"/><polygon points="1275.4,671.3 1277.9,661.9 1278.9,666.9 1276.4,676.3" fill="#c82024" stroke="#0a0000" stroke-width="1.3" stroke-linejoin="round"/><polygon points="1277.9,661.9 1291.5,658.6 1292.5,663.6 1278.9,666.9" fill="#ff2b2b" stroke="#0a0000" stroke-width="1.3" stroke-linejoin="round"/><polygon points="1291.5,658.6 1302.6,664.7 1303.6,669.7 1292.5,663.6" fill="#ff2b2b" stroke="#0a0000" stroke-width="1.3" stroke-linejoin="round"/><polygon points="1303.6,669.7 1301.1,679.1 1287.5,682.4 1276.4,676.3 1278.9,666.9 1292.5,663.6" fill="#7a1517" stroke="#0a0000" stroke-width="1.3" stroke-linejoin="round"/><polygon points="1295.6,671.6 1294.6,675.7 1289.0,677.1 1284.4,674.4 1285.4,670.3 1291.0,668.9" fill="#7a1517" stroke="#0a0000" stroke-width="1"/><polygon points="1283.4,671.9 1284.4,667.8 1290.0,666.4 1294.6,669.1 1295.6,671.6 1290.0,674.0" fill="#e82626" stroke="#0a0000" stroke-width="0.8"/><polygon points="1303.0,725.6 1299.1,734.8 1285.1,737.1 1275.0,730.4 1278.9,721.2 1292.9,718.9" fill="#7a1517" stroke="#0a0000" stroke-width="1.3" stroke-linejoin="round"/><polygon points="1275.0,730.4 1278.9,721.2 1279.9,726.2 1276.0,735.4" fill="#c82024" stroke="#0a0000" stroke-width="1.3" stroke-linejoin="round"/><polygon points="1278.9,721.2 1292.9,718.9 1293.9,723.9 1279.9,726.2" fill="#ff2b2b" stroke="#0a0000" stroke-width="1.3" stroke-linejoin="round"/><polygon points="1292.9,718.9 1303.0,725.6 1304.0,730.6 1293.9,723.9" fill="#ff2b2b" stroke="#0a0000" stroke-width="1.3" stroke-linejoin="round"/><polygon points="1304.0,730.6 1300.1,739.8 1286.1,742.1 1276.0,735.4 1279.9,726.2 1293.9,723.9" fill="#7a1517" stroke="#0a0000" stroke-width="1.3" stroke-linejoin="round"/><polygon points="1295.8,732.0 1294.2,736.0 1288.4,737.0 1284.2,734.0 1285.8,730.0 1291.6,729.0" fill="#7a1517" stroke="#0a0000" stroke-width="1"/><polygon points="1283.2,731.5 1284.8,727.5 1290.6,726.5 1294.8,729.5 1295.8,732.0 1290.0,734.0" fill="#e82626" stroke="#0a0000" stroke-width="0.8"/><polygon points="963.1,689.1 951.1,694.5 938.0,690.3 936.9,680.9 948.9,675.5 962.0,679.7" fill="#7a1517" stroke="#0a0000" stroke-width="1.3" stroke-linejoin="round"/><polygon points="936.9,680.9 948.9,675.5 949.9,680.5 937.9,685.9" fill="#c82024" stroke="#0a0000" stroke-width="1.3" stroke-linejoin="round"/><polygon points="948.9,675.5 962.0,679.7 963.0,684.7 949.9,680.5" fill="#ff2b2b" stroke="#0a0000" stroke-width="1.3" stroke-linejoin="round"/><polygon points="964.1,694.1 952.1,699.5 939.0,695.3 937.9,685.9 949.9,680.5 963.0,684.7" fill="#7a1517" stroke="#0a0000" stroke-width="1.3" stroke-linejoin="round"/><polygon points="956.4,691.8 951.4,694.2 946.0,692.4 945.6,688.2 950.6,685.8 956.0,687.6" fill="#7a1517" stroke="#0a0000" stroke-width="1"/><polygon points="944.6,685.7 949.6,683.3 955.0,685.1 955.4,689.3 956.4,691.8 951.0,691.0" fill="#e82626" stroke="#0a0000" stroke-width="0.8"/><polygon points="964.6,749.3 953.5,755.4 939.9,752.1 937.4,742.7 948.5,736.6 962.1,739.9" fill="#7a1517" stroke="#0a0000" stroke-width="1.3" stroke-linejoin="round"/><polygon points="937.4,742.7 948.5,736.6 949.5,741.6 938.4,747.7" fill="#c82024" stroke="#0a0000" stroke-width="1.3" stroke-linejoin="round"/><polygon points="948.5,736.6 962.1,739.9 963.1,744.9 949.5,741.6" fill="#ff2b2b" stroke="#0a0000" stroke-width="1.3" stroke-linejoin="round"/><polygon points="962.1,739.9 964.6,749.3 965.6,754.3 963.1,744.9" fill="#ff2b2b" stroke="#0a0000" stroke-width="1.3" stroke-linejoin="round"/><polygon points="965.6,754.3 954.5,760.4 940.9,757.1 938.4,747.7 949.5,741.6 963.1,744.9" fill="#7a1517" stroke="#0a0000" stroke-width="1.3" stroke-linejoin="round"/><polygon points="957.6,752.4 953.0,755.1 947.4,753.7 946.4,749.6 951.0,746.9 956.6,748.3" fill="#7a1517" stroke="#0a0000" stroke-width="1"/><polygon points="945.4,747.1 950.0,744.4 955.6,745.8 956.6,749.9 957.6,752.4 952.0,752.0" fill="#e82626" stroke="#0a0000" stroke-width="0.8"/><path d="M1000 830 L1062 832 L1084 806 L1070 800 L1040 828Z" fill="#7a1517"/><path d="M998 835 L1043 829 L1063 835 L1063 842 L998 847Z" fill="#7a1517"/><path d="M1000 760 L1060 720 L1250 740 L1272 792 L1160 840 L1060 845 L1040 830Z" fill="#7a1517"/><path d="M931 771 L992 742 L1014 740 L1043 831 L1001 836 L937 829Z" fill="#e62828" stroke="#0a0000" stroke-width="1.3" stroke-linejoin="round"/><path d="M937 829 L1001 836 L1062 836 L1062 840 L1001 845 L938 837Z" fill="#7a1517" stroke="#0a0000" stroke-width="1.3" stroke-linejoin="round"/><path d="M1010 692 L1025 688 L1032 749 L1044 800 L1062 837 L1043 831 L1030 800 L1016 748Z" fill="#c42222" stroke="#0a0000" stroke-width="1.3" stroke-linejoin="round"/><path d="M1016 748 L1031 747 L1044 801 L1031 801Z" fill="#9a1a1c" stroke="#0a0000" stroke-width="1.3" stroke-linejoin="round"/><path d="M1031 801 L1044 801 L1062 837 L1043 831Z" fill="#7a1517" stroke="#0a0000" stroke-width="1.3" stroke-linejoin="round"/><path d="M1025 688 L1054 747 L1062 836 L1044 800 L1032 749Z" fill="#d82424" stroke="#0a0000" stroke-width="1.3" stroke-linejoin="round"/><path d="M939 841 L1001 845 L1062 840 L1084 806 L1106 809 L1156 838 L1242 882 L1252.5 895 L1254 907 L1205 941 L1101 898 L1007 907 L944 902Z" fill="#e82a2a" stroke="#0a0000" stroke-width="1.3" stroke-linejoin="round"/><path d="M1106 809 L1156 838 L1242 882 L1252.5 895 L1254 907 L1205 941 L1101 898Z" fill="#ff2b2b" stroke="#0a0000" stroke-width="1.3" stroke-linejoin="round"/><path d="M1084 806 L1106 809 L1113 901 L1092 900Z" fill="#ff3030" stroke="#0a0000" stroke-width="1.3" stroke-linejoin="round"/><path d="M944 902 L1007 907 L1101 898 L1205 941 L1254 907 L1254 913 L1200 950 L1103 908 L1008 917 L945 911Z" fill="#7a1517" stroke="#0a0000" stroke-width="1.3" stroke-linejoin="round"/><path d="M1113 669 L1127 666 L1136 723 L1149 776 L1172 837 L1156 838 L1134 779 L1120 726Z" fill="#c42222" stroke="#0a0000" stroke-width="1.3" stroke-linejoin="round"/><path d="M1120 726 L1136 723 L1149 776 L1134 779Z" fill="#9a1a1c" stroke="#0a0000" stroke-width="1.3" stroke-linejoin="round"/><path d="M1134 779 L1149 776 L1172 837 L1156 838Z" fill="#7a1517" stroke="#0a0000" stroke-width="1.3" stroke-linejoin="round"/><path d="M1127 666 L1163 745 L1172 837 L1149 776 L1136 723Z" fill="#d82424" stroke="#0a0000" stroke-width="1.3" stroke-linejoin="round"/><path d="M1163 745 L1206 763 L1267 791 L1284 796 L1315 834 L1317 848 L1265 880 L1173 839Z" fill="#ff2b2b" stroke="#0a0000" stroke-width="1.3" stroke-linejoin="round"/><path d="M1156 838 L1173 839 L1265 880 L1317 848 L1316 854 L1261 889 L1156 844Z" fill="#7a1517" stroke="#0a0000" stroke-width="1.3" stroke-linejoin="round"/><path d="M1207.5 762.3 L1210.6 764.3 L1212.6 787.8 L1208.5 782.7Z" fill="#a01a1d" stroke="#0a0000" stroke-width="1.3" stroke-linejoin="round"/><path d="M1210.6 764.3 L1223.8 752 L1227.9 773.5 L1212.6 787.8Z" fill="#b81e22" stroke="#0a0000" stroke-width="1.3" stroke-linejoin="round"/><path d="M1207.5 762.3 L1218.7 753 L1223.8 752 L1210.6 764.3Z" fill="#ff3030" stroke="#0a0000" stroke-width="1.3" stroke-linejoin="round"/><ellipse cx="956" cy="779" rx="6" ry="5" fill="#7a1517" stroke="#0a0000" stroke-width="1.3" stroke-linejoin="round"/><ellipse cx="953" cy="849" rx="5" ry="4.5" fill="#7a1517" stroke="#0a0000" stroke-width="1.3" stroke-linejoin="round"/><ellipse cx="1307" cy="835" rx="6" ry="5" fill="#7a1517" stroke="#0a0000" stroke-width="1.3" stroke-linejoin="round"/><ellipse cx="1244" cy="897" rx="6" ry="5" fill="#7a1517" stroke="#0a0000" stroke-width="1.3" stroke-linejoin="round"/></svg>
<div class="r" style="left:0px;top:978px;width:1920px;height:20px;background:#f5f5f5;"></div>
<div class="r" style="left:0px;top:978px;width:1920px;height:1px;background:#a0a0a0;"></div>
<div class="r" style="left:2px;top:979px;width:80px;height:19px;background:#a9abc0;"></div>
<div class="r" style="left:2px;top:979px;width:1px;height:19px;background:#8e90a8;"></div>
<div class="r" style="left:22px;top:979px;width:1px;height:19px;background:#8e90a8;"></div>
<div class="r" style="left:42px;top:979px;width:1px;height:19px;background:#8e90a8;"></div>
<div class="r" style="left:62px;top:979px;width:1px;height:19px;background:#8e90a8;"></div>
<svg class="r" style="left:6px;top:982px" width="74" height="14" viewBox="0 0 74 14"><path d="M4 2 V12 M12 2 L6 7 L12 12Z" fill="#7a7c90" stroke="#7a7c90" stroke-width="1"/><path d="M31 2 L25 7 L31 12Z" fill="#7a7c90"/><path d="M45 2 L51 7 L45 12Z" fill="#7a7c90"/><path d="M64 2 L70 7 L64 12Z M71 2 V12" fill="#7a7c90" stroke="#7a7c90" stroke-width="1"/></svg>
<div class="r" style="left:82px;top:979px;width:76px;height:19px;background:#ffffff;"></div>
<div class="r" style="left:158px;top:979px;width:233px;height:19px;background:#d4d4d4;border:1px solid #a0a0a0;border-top:none;box-sizing:border-box;"></div>
<div class="r" style="left:247px;top:979px;width:1px;height:19px;background:#a0a0a0;"></div>
<div class="t" style="left:122px;top:981.38px;font-size:15.5px;line-height:15.5px;color:#111;font-weight:bold;transform:translateX(-50%);">Model</div>
<div class="t" style="left:202px;top:980.68px;font-size:15.5px;line-height:15.5px;color:#1a1a1a;font-weight:normal;transform:translateX(-50%);">3D Views</div>
<div class="t" style="left:314px;top:981.38px;font-size:15.5px;line-height:15.5px;color:#1a1a1a;font-weight:normal;transform:translateX(-50%);">Motion Study 1</div>
<div class="r" style="left:0px;top:998px;width:1920px;height:22px;background:#f5f5f5;"></div>
<div class="r" style="left:0px;top:998px;width:1920px;height:1px;background:#d0d0d0;"></div>
<div class="t" style="left:1px;top:1004.82px;font-size:13.8px;line-height:13.8px;color:#111;font-weight:normal;">SOLIDWORKS Premium 2023 SP0.1</div>
<div class="t" style="left:1445px;top:1003.89px;font-size:14.9px;line-height:14.9px;color:#111;font-weight:normal;">Under Defined</div>
<div class="t" style="left:1560px;top:1003.89px;font-size:14.9px;line-height:14.9px;color:#111;font-weight:normal;">Editing Assembly</div>
<div class="t" style="left:1810px;top:1004.65px;font-size:14px;line-height:14px;color:#111;font-weight:normal;">IPS</div>
<svg class="r" style="left:1867px;top:1008px" width="8" height="6" viewBox="0 0 8 6"><path d="M0 5 L4 1 L8 5Z" fill="#333"/></svg>
<svg class="r" style="left:1899px;top:1002px" width="20" height="17" viewBox="0 0 20 17"><path d="M2 8 L12 2 L18 8 L8 15Z" fill="#f4f4f4" stroke="#333" stroke-width="1.1"/><path d="M8 7 L12 5" stroke="#333" stroke-width="1.5"/></svg>
<div class="r" style="left:0px;top:1020px;width:1920px;height:60px;background:#1d1d1e;"></div>
<div class="r" style="left:0px;top:1020px;width:1920px;height:1px;background:#404040;"></div>
<svg class="r" style="left:27px;top:1036px" width="26" height="26" viewBox="0 0 26 26"><defs><radialGradient id="sun" cx="0.4" cy="0.35" r="0.7"><stop offset="0" stop-color="#ffc02a"/><stop offset="1" stop-color="#f0701a"/></radialGradient></defs><circle cx="13" cy="13" r="12" fill="url(#sun)"/></svg>
<div class="t" style="left:64px;top:1033.15px;font-size:14px;line-height:14px;color:#ffffff;font-weight:normal;">24°C</div>
<div class="t" style="left:64px;top:1053.15px;font-size:14px;line-height:14px;color:#e0e0e0;font-weight:normal;">Sunny</div>
<svg class="r" style="left:408px;top:1033px" width="32" height="32" viewBox="0 0 32 32"><defs><linearGradient id="wl" x1="0" y1="0" x2="1" y2="1"><stop offset="0" stop-color="#6fd3ff"/><stop offset="1" stop-color="#1a9cf0"/></linearGradient></defs><rect x="2" y="2" width="13" height="13" rx="1" fill="url(#wl)"/><rect x="17" y="2" width="13" height="13" rx="1" fill="url(#wl)"/><rect x="2" y="17" width="13" height="13" rx="1" fill="url(#wl)"/><rect x="17" y="17" width="13" height="13" rx="1" fill="url(#wl)"/></svg>
<div class="r" style="left:457px;top:1030px;width:273px;height:40px;background:#3a3a40;border-radius:20px;border:1px solid #4a4a50;box-sizing:border-box;"></div>
<svg class="r" style="left:469px;top:1040px" width="22" height="22" viewBox="0 0 22 22"><circle cx="9" cy="9" r="6.5" fill="none" stroke="#eee" stroke-width="2"/><path d="M14 14 L19 19" stroke="#eee" stroke-width="2.2"/></svg>
<div class="t" style="left:502px;top:1042.61px;font-size:17px;line-height:17px;color:#e8e8e8;font-weight:normal;">Search</div>
<div class="r" style="left:672px;top:1036px;width:46px;height:28px;background:#e8d8a8;"></div>
<svg class="r" style="left:676px;top:1038px" width="38" height="24" viewBox="0 0 38 24"><rect x="2" y="2" width="34" height="20" fill="none" stroke="#333" stroke-width="1"/><path d="M4 22 C4 8 14 3 24 5 C32 7 32 16 28 18 C25 20 22 17 24 15" fill="none" stroke="#333" stroke-width="1.2"/><path d="M24 2 V22 M24 12 H36" stroke="#333" stroke-width="0.8"/></svg>
<svg class="r" style="left:746px;top:1035px" width="32" height="30" viewBox="0 0 32 30"><rect x="11" y="2" width="18" height="17" rx="2" fill="#eee"/><rect x="3" y="9" width="18" height="17" rx="2" fill="#8a8a8a"/></svg>
<svg class="r" style="left:800px;top:1034px" width="32" height="32" viewBox="0 0 32 32"><circle cx="16" cy="15" r="14" fill="#6a6ad8"/><path d="M4 28 L9 22" stroke="#6a6ad8" stroke-width="4"/><rect x="8" y="10" width="11" height="10" rx="2" fill="#fff"/><path d="M19 13 L24 10 V20 L19 17Z" fill="#fff"/></svg>
<svg class="r" style="left:855px;top:1034px" width="32" height="32" viewBox="0 0 32 32"><circle cx="16" cy="16" r="14.5" fill="#1ed760"/><path d="M8 12 Q16 8 25 13 M9 17 Q16 14 23 18 M10 21.5 Q16 19 22 22" fill="none" stroke="#111" stroke-width="2.4" stroke-linecap="round"/></svg>
<svg class="r" style="left:909px;top:1033px" width="34" height="32" viewBox="0 0 34 32"><path d="M2 6 H13 L16 9 H32 V28 H2Z" fill="#f2c23a"/><rect x="2" y="11" width="30" height="17" fill="#ffd54f"/><rect x="11" y="21" width="14" height="6" rx="1" fill="#1e78d0"/></svg>
<div class="r" style="left:921px;top:1068px;width:10px;height:3px;background:#9a9a9a;border-radius:2px;"></div>
<svg class="r" style="left:965px;top:1034px" width="32" height="32" viewBox="0 0 32 32"><circle cx="16" cy="16" r="15" fill="#fffc00"/><path d="M16 6 C11 6 10 10 10 13 L8 14 L10 15 C9 18 7 20 6 20 C9 22 11 21 12 23 C14 23 15 24 16 24 C17 24 18 23 20 23 C21 21 23 22 26 20 C25 20 23 18 22 15 L24 14 L22 13 C22 10 21 6 16 6Z" fill="#fff" stroke="#111" stroke-width="1.2"/></svg>
<svg class="r" style="left:1020px;top:1034px" width="32" height="32" viewBox="0 0 32 32"><path d="M4 9 H28 L27 28 Q27 30 25 30 H7 Q5 30 5 28Z" fill="#f4f4f4"/><path d="M11 9 C11 3 21 3 21 9" fill="none" stroke="#2a9ae0" stroke-width="2"/><rect x="11" y="13" width="4.5" height="4.5" fill="#f25022"/><rect x="16.5" y="13" width="4.5" height="4.5" fill="#7fba00"/><rect x="11" y="18.5" width="4.5" height="4.5" fill="#00a4ef"/><rect x="16.5" y="18.5" width="4.5" height="4.5" fill="#ffb900"/></svg>
<svg class="r" style="left:1075px;top:1034px" width="32" height="32" viewBox="0 0 32 32"><path d="M2 10 L16 2 L30 10 V28 H2Z" fill="#0a6ed1"/><path d="M2 10 L16 20 L30 10 V28 H2Z" fill="#2fa3f0"/><path d="M2 28 L16 18 L30 28Z" fill="#5ec0ff"/></svg>
<svg class="r" style="left:1130px;top:1034px" width="32" height="32" viewBox="0 0 32 32"><path d="M16 2 L30 16 L16 30 L2 16Z" fill="#f03a5a"/><path d="M16 2 L30 16 L16 16Z" fill="#ff7a1a"/><path d="M2 16 L16 30 L16 16Z" fill="#e01a8a"/></svg>
<svg class="r" style="left:1185px;top:1034px" width="32" height="32" viewBox="0 0 32 32"><circle cx="16" cy="16" r="14" fill="#1aa0e8"/><path d="M8 20 C6 10 18 4 26 12 C28 16 22 18 18 17 C12 16 13 22 18 24 C14 26 9 24 8 20Z" fill="#3bd48a"/><path d="M18 17 C22 18 28 16 26 12 C29 18 27 26 20 28 C15 28 12 24 18 24" fill="#0d5aa8"/></svg>
<svg class="r" style="left:1240px;top:1034px" width="32" height="32" viewBox="0 0 32 32"><circle cx="16" cy="16" r="13" fill="#e8403a"/><path d="M16 16 L27 22 A13 13 0 0 1 5 22Z" fill="#2aa84a"/><path d="M16 16 L5 22 A13 13 0 0 1 16 3Z" fill="#f6c02a"/><circle cx="16" cy="16" r="6" fill="#fff"/><circle cx="16" cy="16" r="4.5" fill="#3a78e8"/></svg>
<svg class="r" style="left:1253px;top:1028px" width="22" height="22" viewBox="0 0 22 22"><circle cx="11" cy="11" r="10" fill="#1aa2a8"/><text x="6" y="16" font-size="12" fill="#fff" font-family="Liberation Sans" font-weight="bold">K</text></svg>
<div class="r" style="left:1251px;top:1068px;width:10px;height:3px;background:#9a9a9a;border-radius:2px;"></div>
<svg class="r" style="left:1295px;top:1034px" width="32" height="32" viewBox="0 0 32 32"><circle cx="18" cy="16" r="13" fill="#e8642a"/><path d="M18 16 V3 A13 13 0 0 1 31 16Z" fill="#f5895a"/><rect x="3" y="9" width="15" height="14" rx="2" fill="#c43e1c"/><text x="6" y="21" font-size="11" fill="#fff" font-family="Liberation Sans" font-weight="bold">P</text></svg>
<div class="r" style="left:1306px;top:1068px;width:10px;height:3px;background:#9a9a9a;border-radius:2px;"></div>
<svg class="r" style="left:1350px;top:1034px" width="32" height="32" viewBox="0 0 32 32"><circle cx="16" cy="16" r="13" fill="#2ec35a"/><path d="M4 29 L7 21" stroke="#2ec35a" stroke-width="4"/><circle cx="16" cy="16" r="10" fill="none" stroke="#fff" stroke-width="2"/><path d="M11 12 C11 18 16 21 21 21" fill="none" stroke="#fff" stroke-width="2.4"/></svg>
<svg class="r" style="left:1362px;top:1027px" width="28" height="24" viewBox="0 0 28 24"><rect x="1" y="2" width="26" height="20" rx="10" fill="#f06a50"/><text x="6" y="17" font-size="13" fill="#fff" font-family="Liberation Sans">23</text></svg>
<div class="r" style="left:1361px;top:1068px;width:10px;height:3px;background:#9a9a9a;border-radius:2px;"></div>
<div class="r" style="left:1396px;top:1026px;width:44px;height:48px;background:#2c2c32;border-radius:5px;"></div>
<svg class="r" style="left:1403px;top:1031px" width="30" height="34" viewBox="0 0 30 34"><path d="M4 8 L18 3 L28 8 V26 L14 31 L4 26Z" fill="#c8161c"/><text x="8" y="24" font-size="15" fill="#fff" font-family="Liberation Sans" font-weight="bold">S</text></svg>
<div class="r" style="left:1412px;top:1068px;width:14px;height:3px;background:#e06a5a;border-radius:2px;"></div>
<div class="t" style="left:1637px;top:1034.15px;font-size:14px;line-height:14px;color:#8a8a8a;font-weight:normal;">ENG</div>
<div class="t" style="left:1645px;top:1054.15px;font-size:14px;line-height:14px;color:#8a8a8a;font-weight:normal;">IN</div>
<div class="t" style="left:1831px;top:1033.15px;font-size:14px;line-height:14px;color:#7a7a7a;font-weight:normal;font-family:'Liberation Serif';">07:30</div>
<div class="t" style="left:1790px;top:1052.15px;font-size:14px;line-height:14px;color:#7a7a7a;font-weight:normal;font-family:'Liberation Serif';">23-11-2025</div>
<svg class="r" style="left:1594px;top:1040px" width="22" height="20" viewBox="0 0 22 20"><rect x="2" y="4" width="12" height="12" fill="#7a7a7a"/><text x="4" y="14" font-size="10" font-family="Liberation Sans" font-weight="bold" fill="#3a3ab0">T</text><circle cx="16" cy="8" r="4" fill="none" stroke="#3a3ab0" stroke-width="1.5"/></svg>
<svg class="r" style="left:1562px;top:1050px" width="12" height="12" viewBox="0 0 12 12"><circle cx="6" cy="6" r="5" fill="#b06a10"/></svg>
<svg class="r" style="left:1686px;top:1040px" width="24" height="22" viewBox="0 0 24 22"><rect x="2" y="2" width="18" height="14" fill="none" stroke="#888" stroke-width="1.3"/><path d="M6 20 H16" stroke="#888" stroke-width="1.3"/></svg>
<svg class="r" style="left:1718px;top:1042px" width="22" height="18" viewBox="0 0 22 18"><path d="M2 6 H6 L11 2 V16 L6 12 H2Z" fill="none" stroke="#888" stroke-width="1.3"/><path d="M14 5 Q17 9 14 13" fill="none" stroke="#888" stroke-width="1.3"/></svg>
<svg class="r" style="left:1748px;top:1043px" width="26" height="14" viewBox="0 0 26 14"><rect x="1" y="2" width="20" height="10" fill="none" stroke="#888" stroke-width="1.3"/><rect x="3" y="4" width="12" height="6" fill="#888"/></svg>
<svg class="r" style="left:1870px;top:1036px" width="30" height="30" viewBox="0 0 30 30"><circle cx="15" cy="15" r="12" fill="#a0604a"/></svg>
<div class="r" style="left:1414px;top:1030px;width:506px;height:50px;background:rgba(10,10,10,0.80);"></div>
<div class="t" style="left:1415px;top:1033.40px;font-size:43px;line-height:43px;color:#ffffff;font-weight:normal;">17-Mar-2026 06:05:43 PM</div>
</body></html>
